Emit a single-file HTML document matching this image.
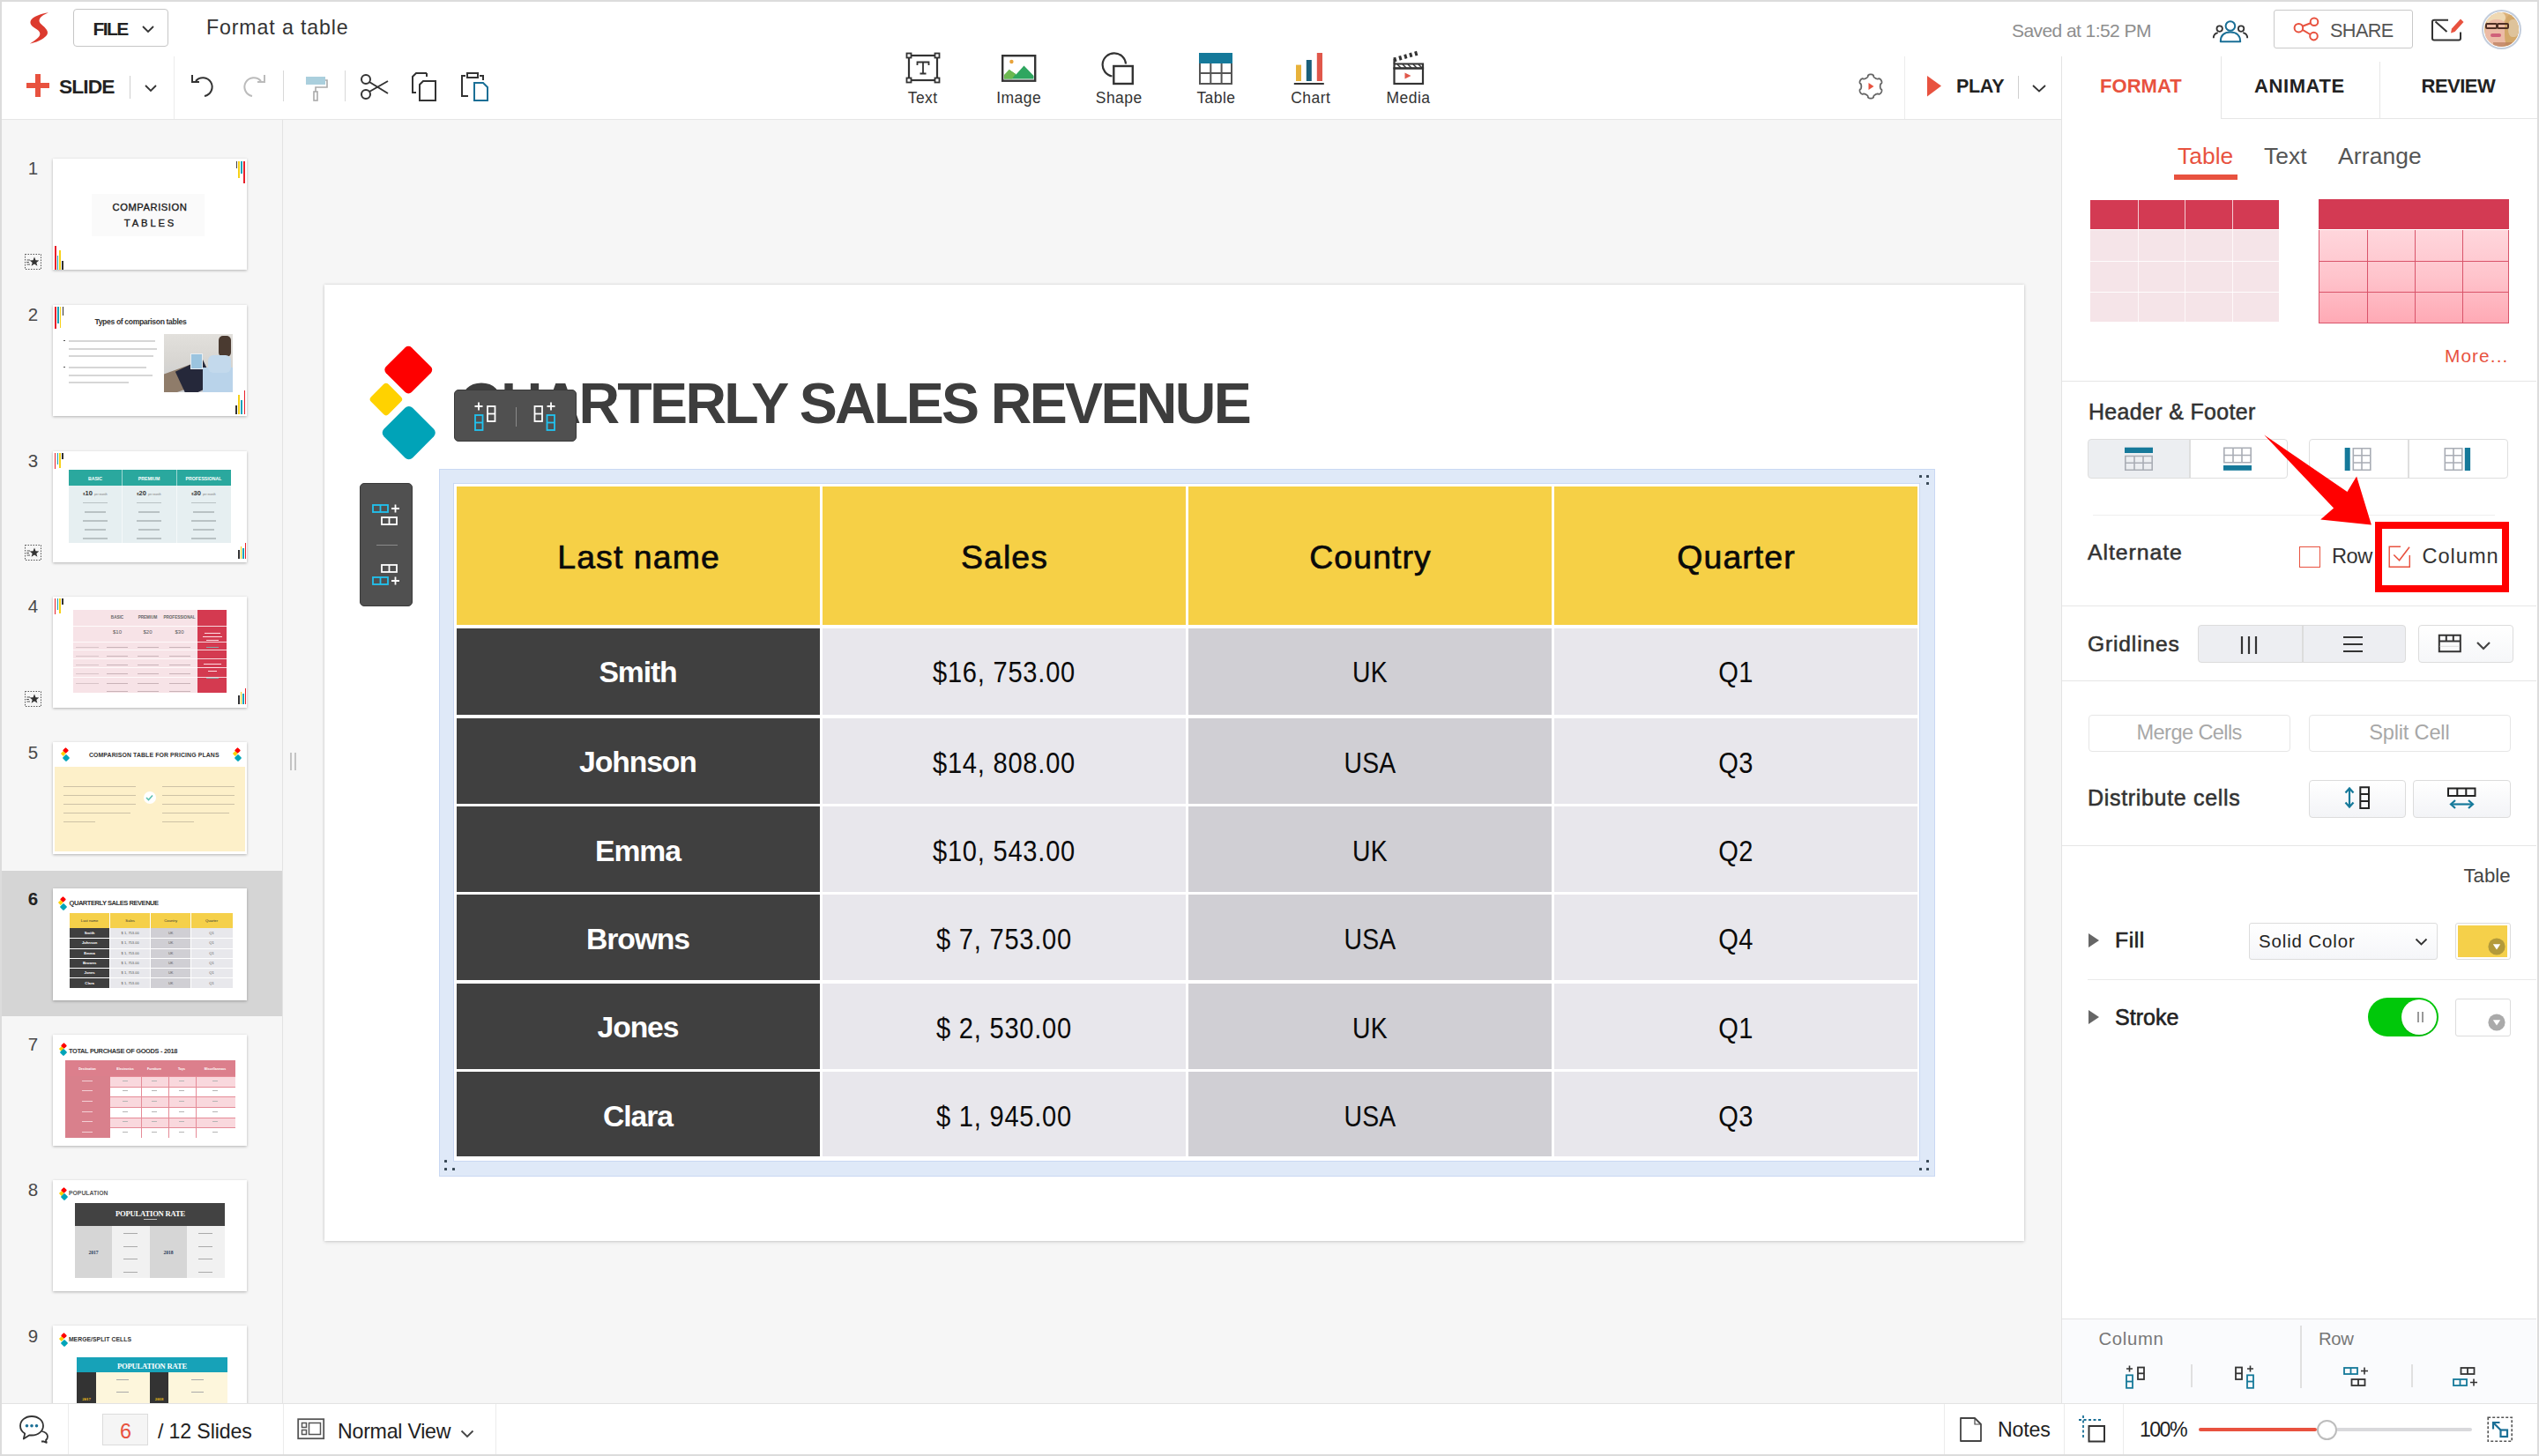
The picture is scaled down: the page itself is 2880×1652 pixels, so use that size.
<!DOCTYPE html>
<html><head><meta charset="utf-8"><title>Format a table</title>
<style>
html,body{margin:0;padding:0;}
body{width:2880px;height:1652px;overflow:hidden;position:relative;background:#dcdcdc;font-family:"Liberation Sans",sans-serif;}
.a{position:absolute;}
.t{line-height:1;white-space:nowrap;}
svg{overflow:visible;}
</style></head><body>
<div class="a" style="left:2px;top:2px;width:2876px;height:1648px;background:#ffffff;"></div>
<div class="a" style="left:2px;top:136px;width:318px;height:1456px;background:#f6f6f6;"></div>
<div class="a" style="left:320px;top:136px;width:1px;height:1456px;background:#e3e3e3;"></div>
<div class="a" style="left:321px;top:136px;width:2017px;height:1456px;background:#f6f6f6;"></div>
<div class="a" style="left:2px;top:135px;width:2336px;height:1px;background:#e6e6e6;"></div>
<div class="a" style="left:2519px;top:134px;width:359px;height:1px;background:#e6e6e6;"></div>
<div class="a" style="left:2338px;top:64px;width:1px;height:1528px;background:#e3e3e3;"></div>
<div class="a" style="left:2px;top:1592px;width:2876px;height:1px;background:#e3e3e3;"></div>
<svg class="a" style="left:25px;top:8px;" width="40" height="48" viewBox="0 0 40 48"><path d="M30 6.3 C22 7.5, 11 11, 9.6 16 C8.5 20.5, 13 23, 17 25.5 C20 27.5, 21 30, 20 32.3 C18 36, 12 39.5, 8.9 41.6 C15 40.5, 24 37, 28 32 C30.5 28.5, 28 25, 24 21.5 C21 19, 18.5 16.5, 20 13.5 C21.5 10.5, 26 8, 30 6.3 Z" fill="#dc3a2e"/></svg>
<div class="a" style="left:83px;top:10px;width:108px;height:43px;border:1px solid #c6c6c6;border-radius:4px;box-sizing:border-box;"></div>
<div class="a t" style="top:22.22px;font-size:21px;font-weight:700;color:#222;letter-spacing:-1.6px;left:105.5px;">FILE</div>
<svg class="a" style="left:161px;top:29px;" width="14" height="9" viewBox="0 0 14 9"><path d="M1 1 L7 7 L13 1" fill="none" stroke="#333" stroke-width="1.8"/></svg>
<div class="a t" style="top:20.06px;font-size:23.2px;font-weight:400;color:#333;letter-spacing:0.86px;left:234px;">Format a table</div>
<div class="a t" style="top:24.22px;font-size:21px;font-weight:400;color:#8e8e8e;letter-spacing:-0.57px;left:2282px;">Saved at 1:52 PM</div>
<svg class="a" style="left:2508px;top:20px;" width="44" height="30" viewBox="0 0 44 30">
<circle cx="21.9" cy="9.5" r="5.3" fill="none" stroke="#1a6f96" stroke-width="2"/>
<path d="M10.8 27.2 C10.8 19.8, 15.5 16.6, 21.9 16.6 C28.3 16.6, 33.2 19.8, 33.2 27.2 Z" fill="none" stroke="#1a6f96" stroke-width="2" stroke-linejoin="round"/>
<circle cx="9.7" cy="12.6" r="3.2" fill="none" stroke="#333" stroke-width="1.8"/>
<path d="M2.8 23.3 C2.8 20, 4.6 17.8, 7.8 17.2" fill="none" stroke="#333" stroke-width="1.8"/>
<circle cx="34.1" cy="12.6" r="3.2" fill="none" stroke="#333" stroke-width="1.8"/>
<path d="M41.2 23.3 C41.2 20, 39.4 17.8, 36.2 17.2" fill="none" stroke="#333" stroke-width="1.8"/>
</svg>
<div class="a" style="left:2579px;top:11px;width:158px;height:44px;border:1.5px solid #c9c9c9;border-radius:3px;box-sizing:border-box;"></div>
<svg class="a" style="left:2600px;top:18px;" width="32" height="30" viewBox="0 0 32 30">
<circle cx="7.4" cy="13.7" r="4.8" fill="none" stroke="#e8523f" stroke-width="2"/>
<circle cx="25" cy="6.7" r="4.3" fill="none" stroke="#e8523f" stroke-width="2"/>
<circle cx="24.5" cy="23.1" r="4.3" fill="none" stroke="#e8523f" stroke-width="2"/>
<path d="M11.8 11.8 L20.9 8.3 M11.8 15.8 L20.5 21" stroke="#e8523f" stroke-width="2"/>
</svg>
<div class="a t" style="top:23.63px;font-size:21.7px;font-weight:400;color:#555;letter-spacing:-0.6px;left:2643px;">SHARE</div>
<svg class="a" style="left:2756px;top:19px;" width="42" height="30" viewBox="0 0 42 30">
<path d="M21 3.8 H5 Q3 3.8 3 5.8 V24.5 Q3 26.5 5 26.5 H33 Q35 26.5 35 24.5 V17.5" fill="none" stroke="#333" stroke-width="2"/>
<path d="M6.5 5.5 L19.5 17" fill="none" stroke="#333" stroke-width="2"/>
<path d="M25 13.5 L35 2.5 L38.5 6 L28.5 17 L24 18.5 Z" fill="#e8523f"/>
</svg>
<div class="a" style="left:2815px;top:10.5px;width:45px;height:45px;border-radius:50%;box-sizing:border-box;border:2px solid #c3cddc;background:#fff;"></div><div class="a" style="left:2818px;top:13.5px;width:39px;height:39px;border-radius:50%;overflow:hidden;background:#dcb27a;"><div style="position:absolute;left:0;top:-2px;width:24px;height:16px;border-radius:50%;background:#efd9b4;"></div><div style="position:absolute;left:1px;top:8px;width:26px;height:32px;border-radius:45%;background:#ecbba6;"></div><div style="position:absolute;left:23px;top:2px;width:18px;height:40px;border-radius:40%;background:#d3a86a;"></div><div style="position:absolute;left:27px;top:8px;width:12px;height:20px;border-radius:40%;background:#e9ddcc;opacity:0.5;"></div><div style="position:absolute;left:1px;top:12.5px;width:13.5px;height:7px;border:2.2px solid #4e2e24;border-radius:2px;box-sizing:border-box;"></div><div style="position:absolute;left:14px;top:12.5px;width:13.5px;height:7px;border:2.2px solid #4e2e24;border-radius:2px;box-sizing:border-box;"></div><div style="position:absolute;left:7px;top:24.5px;width:12px;height:4px;border-radius:2px;background:#d0607a;"></div><div style="position:absolute;left:10px;top:34px;width:22px;height:8px;background:#b97c5c;opacity:0.7;"></div></div>
<div class="a" style="left:30px;top:94px;width:26px;height:6px;background:#e8523f;"></div>
<div class="a" style="left:40px;top:84px;width:6px;height:26px;background:#e8523f;"></div>
<div class="a t" style="top:86.70px;font-size:22.8px;font-weight:700;color:#222;letter-spacing:-0.9px;left:67px;">SLIDE</div>
<div class="a" style="left:147px;top:86px;width:1px;height:26px;background:#cfcfcf;"></div>
<svg class="a" style="left:164px;top:96px;" width="14" height="9" viewBox="0 0 14 9"><path d="M1 1 L7 7 L13 1" fill="none" stroke="#333" stroke-width="1.8"/></svg>
<div class="a" style="left:197px;top:64px;width:1px;height:71px;background:#ececec;"></div>
<svg class="a" style="left:216px;top:83px;" width="30" height="30" viewBox="0 0 30 30"><path d="M6 9 A10.5 10.5 0 1 1 16 26" fill="none" stroke="#333" stroke-width="2"/><path d="M2 2 V10 H10" fill="none" stroke="#333" stroke-width="2"/></svg>
<svg class="a" style="left:272px;top:83px;" width="30" height="30" viewBox="0 0 30 30"><path d="M24 9 A10.5 10.5 0 1 0 14 26" fill="none" stroke="#bbb" stroke-width="2"/><path d="M28 2 V10 H20" fill="none" stroke="#bbb" stroke-width="2"/></svg>
<div class="a" style="left:321px;top:80px;width:1px;height:35px;background:#d8d8d8;"></div>
<svg class="a" style="left:344px;top:84px;" width="30" height="33" viewBox="0 0 30 33"><rect x="3" y="3" width="22" height="9" fill="#aacfdd"/><path d="M25 7 H27 V15 H14 V20" fill="none" stroke="#aaa" stroke-width="1.6"/><rect x="12" y="20" width="4" height="10" fill="none" stroke="#aaa" stroke-width="1.6"/></svg>
<div class="a" style="left:391px;top:80px;width:1px;height:35px;background:#d8d8d8;"></div>
<svg class="a" style="left:408px;top:83px;" width="34" height="32" viewBox="0 0 34 32"><circle cx="7" cy="7" r="5" fill="none" stroke="#333" stroke-width="2"/><circle cx="7" cy="24" r="5" fill="none" stroke="#333" stroke-width="2"/><path d="M11 10 L32 23 M11 21 L32 9" fill="none" stroke="#333" stroke-width="2"/></svg>
<svg class="a" style="left:466px;top:81px;" width="32" height="35" viewBox="0 0 32 35"><path d="M18 2 H6 L2 6 V24 H6" fill="none" stroke="#333" stroke-width="2"/><path d="M18 2 V6" stroke="#333" stroke-width="2"/><path d="M14 11 H28 V33 H10 V15 Z" fill="none" stroke="#333" stroke-width="2"/></svg>
<svg class="a" style="left:520px;top:81px;" width="36" height="35" viewBox="0 0 36 35"><path d="M8 5 H4 V28 H11" fill="none" stroke="#333" stroke-width="2"/><path d="M24 5 H28 V10" fill="none" stroke="#333" stroke-width="2"/><rect x="10" y="2" width="12" height="5" fill="none" stroke="#333" stroke-width="2"/><path d="M18 13 H28 L33 18 V33 H18 Z" fill="none" stroke="#1a6f96" stroke-width="2"/></svg>
<svg class="a" style="left:1027px;top:59px;" width="40" height="36" viewBox="0 0 40 36">
<rect x="4" y="4" width="32" height="28" fill="none" stroke="#333" stroke-width="2.2"/>
<rect x="1.5" y="1.5" width="5" height="5" fill="#fff" stroke="#333" stroke-width="1.8"/>
<rect x="33.5" y="1.5" width="5" height="5" fill="#fff" stroke="#333" stroke-width="1.8"/>
<rect x="1.5" y="29.5" width="5" height="5" fill="#fff" stroke="#333" stroke-width="1.8"/>
<rect x="33.5" y="29.5" width="5" height="5" fill="#fff" stroke="#333" stroke-width="1.8"/>
<path d="M13.5 15 V11.5 H26.5 V15 M20 11.5 V24.5 M16.5 24.5 H23.5" fill="none" stroke="#333" stroke-width="1.8"/>
</svg>
<div class="a t" style="top:102.98px;font-size:17.5px;font-weight:400;color:#333;letter-spacing:0.4px;left:46.70px;width:2000px;text-align:center;">Text</div>
<svg class="a" style="left:1135px;top:61px;" width="42" height="34" viewBox="0 0 42 34">
<rect x="2.2" y="2.2" width="37" height="28.5" fill="none" stroke="#333" stroke-width="2.4"/>
<circle cx="12.4" cy="9" r="2.2" fill="#e8a33a"/>
<path d="M4.5 28.5 L4.5 24 L9.8 18 L17 23 L4.5 28.5 Z" fill="#6cb850"/>
<path d="M4 28.5 L9.5 18.3 L17.5 23.5 L26.5 13.4 L37.5 25 V28.5 Z" fill="#2fa660"/>
<path d="M4 28.5 V24 L9.6 18.3 L17 23 L13 28.5 Z" fill="#6cb850"/>
</svg>
<div class="a t" style="top:102.98px;font-size:17.5px;font-weight:400;color:#333;letter-spacing:0.45px;left:155.72px;width:2000px;text-align:center;">Image</div>
<svg class="a" style="left:1248px;top:57px;" width="40" height="40" viewBox="0 0 40 40">
<path d="M13.5 29.5 A13.2 13.2 0 1 1 29 15.5" fill="none" stroke="#333" stroke-width="2.2"/>
<rect x="15.3" y="18" width="21.5" height="20" fill="none" stroke="#333" stroke-width="2.4"/>
</svg>
<div class="a t" style="top:102.98px;font-size:17.5px;font-weight:400;color:#333;letter-spacing:0.45px;left:269.23px;width:2000px;text-align:center;">Shape</div>
<svg class="a" style="left:1359px;top:59px;" width="40" height="38" viewBox="0 0 40 38">
<rect x="1" y="1" width="38" height="12" fill="#15799a"/>
<path d="M2 13 V36 H38 V13 M14.3 13 V36 M26.6 13 V36 M2 24 H38" fill="none" stroke="#555" stroke-width="2"/>
</svg>
<div class="a t" style="top:102.98px;font-size:17.5px;font-weight:400;color:#333;letter-spacing:0.45px;left:379.43px;width:2000px;text-align:center;">Table</div>
<svg class="a" style="left:1466px;top:58px;" width="38" height="40" viewBox="0 0 38 40">
<rect x="4" y="15.6" width="6" height="18.4" fill="#e8b23a"/>
<rect x="15.8" y="10" width="6" height="24" fill="#1a5f7a"/>
<rect x="27.8" y="2" width="6.2" height="32" fill="#e0574a"/>
<rect x="1.8" y="36" width="34" height="2" fill="#333"/>
</svg>
<div class="a t" style="top:102.98px;font-size:17.5px;font-weight:400;color:#333;letter-spacing:0.45px;left:486.73px;width:2000px;text-align:center;">Chart</div>
<svg class="a" style="left:1578px;top:57px;" width="40" height="40" viewBox="0 0 40 40">
<rect x="3.5" y="20.5" width="32.5" height="17.5" fill="none" stroke="#333" stroke-width="2.2"/>
<path d="M3.5 15.5 H36 V20.5 H3.5 Z" fill="none" stroke="#333" stroke-width="2.2"/>
<path d="M7 16 L11 20 M13 16 L17 20 M19 16 L23 20 M25 16 L29 20 M31 16 L35 20" stroke="#333" stroke-width="1.5"/>
<path d="M3 11 L30.5 3" fill="none" stroke="#333" stroke-width="5" stroke-dasharray="3 3.2"/>
<path d="M3.5 10 V15" stroke="#333" stroke-width="2.2"/>
<path d="M15.5 25.5 L22.5 29 L15.5 32.5 Z" fill="#e0574a"/>
</svg>
<div class="a t" style="top:102.98px;font-size:17.5px;font-weight:400;color:#333;letter-spacing:0.45px;left:597.52px;width:2000px;text-align:center;">Media</div>
<svg class="a" style="left:2106px;top:82px;" width="32" height="32" viewBox="0 0 32 32"><path d="M26.70 16.00 L26.71 16.37 L26.73 16.75 L26.78 17.13 L26.84 17.52 L26.93 17.93 L27.07 18.35 L27.31 18.82 L28.25 19.51 L28.44 20.04 L28.50 20.55 L28.47 21.04 L28.39 21.52 L28.26 21.98 L28.08 22.42 L27.86 22.85 L27.61 23.25 L27.31 23.63 L26.97 23.97 L26.60 24.28 L26.19 24.55 L25.72 24.76 L25.17 24.85 L24.10 24.39 L23.57 24.41 L23.14 24.50 L22.74 24.63 L22.37 24.77 L22.02 24.92 L21.68 25.09 L21.35 25.27 L21.03 25.46 L20.72 25.67 L20.41 25.90 L20.10 26.15 L19.80 26.43 L19.50 26.76 L19.21 27.21 L19.08 28.36 L18.72 28.80 L18.31 29.10 L17.87 29.32 L17.42 29.49 L16.95 29.61 L16.48 29.68 L16.00 29.70 L15.52 29.68 L15.05 29.61 L14.58 29.49 L14.13 29.32 L13.69 29.10 L13.28 28.80 L12.92 28.36 L12.79 27.21 L12.50 26.76 L12.20 26.43 L11.90 26.15 L11.59 25.90 L11.28 25.67 L10.97 25.46 L10.65 25.27 L10.32 25.09 L9.98 24.92 L9.63 24.77 L9.26 24.63 L8.86 24.50 L8.43 24.41 L7.90 24.39 L6.83 24.85 L6.28 24.76 L5.81 24.55 L5.40 24.28 L5.03 23.97 L4.69 23.63 L4.39 23.25 L4.14 22.85 L3.92 22.42 L3.74 21.98 L3.61 21.52 L3.53 21.04 L3.50 20.55 L3.56 20.04 L3.75 19.51 L4.69 18.82 L4.93 18.35 L5.07 17.93 L5.16 17.52 L5.22 17.13 L5.27 16.75 L5.29 16.37 L5.30 16.00 L5.29 15.63 L5.27 15.25 L5.22 14.87 L5.16 14.48 L5.07 14.07 L4.93 13.65 L4.69 13.18 L3.75 12.49 L3.56 11.96 L3.50 11.45 L3.53 10.96 L3.61 10.48 L3.74 10.02 L3.92 9.58 L4.14 9.15 L4.39 8.75 L4.69 8.37 L5.03 8.03 L5.40 7.72 L5.81 7.45 L6.28 7.24 L6.83 7.15 L7.90 7.61 L8.43 7.59 L8.86 7.50 L9.26 7.37 L9.63 7.23 L9.98 7.08 L10.32 6.91 L10.65 6.73 L10.97 6.54 L11.28 6.33 L11.59 6.10 L11.90 5.85 L12.20 5.57 L12.50 5.24 L12.79 4.79 L12.92 3.64 L13.28 3.20 L13.69 2.90 L14.13 2.68 L14.58 2.51 L15.05 2.39 L15.52 2.32 L16.00 2.30 L16.48 2.32 L16.95 2.39 L17.42 2.51 L17.87 2.68 L18.31 2.90 L18.72 3.20 L19.08 3.64 L19.21 4.79 L19.50 5.24 L19.80 5.57 L20.10 5.85 L20.41 6.10 L20.72 6.33 L21.03 6.54 L21.35 6.73 L21.68 6.91 L22.02 7.08 L22.37 7.23 L22.74 7.37 L23.14 7.50 L23.57 7.59 L24.10 7.61 L25.17 7.15 L25.72 7.24 L26.19 7.45 L26.60 7.72 L26.97 8.03 L27.31 8.37 L27.61 8.75 L27.86 9.15 L28.08 9.58 L28.26 10.02 L28.39 10.48 L28.47 10.96 L28.50 11.45 L28.44 11.96 L28.25 12.49 L27.31 13.18 L27.07 13.65 L26.93 14.07 L26.84 14.48 L26.78 14.87 L26.73 15.25 L26.71 15.63 Z" fill="none" stroke="#666" stroke-width="1.8"/><path d="M13.5 12 L19.5 16 L13.5 20 Z" fill="#e8523f"/></svg>
<div class="a" style="left:2160px;top:64px;width:1px;height:71px;background:#ececec;"></div>
<svg class="a" style="left:2185px;top:85px;" width="18" height="26" viewBox="0 0 18 26"><path d="M1 1 L17 12.5 L1 24.5 Z" fill="#e8523f"/></svg>
<div class="a t" style="top:87.80px;font-size:21.5px;font-weight:700;color:#222;letter-spacing:-0.3px;left:2219px;">PLAY</div>
<div class="a" style="left:2289px;top:86px;width:1px;height:26px;background:#cfcfcf;"></div>
<svg class="a" style="left:2305px;top:96px;" width="16" height="9" viewBox="0 0 16 9"><path d="M1 1 L8 7.5 L15 1" fill="none" stroke="#333" stroke-width="1.8"/></svg>
<div class="a" style="left:2519px;top:64px;width:1px;height:70px;background:#e6e6e6;"></div>
<div class="a" style="left:2699px;top:70px;width:1px;height:64px;background:#e6e6e6;"></div>
<div class="a t" style="top:87.37px;font-size:22px;font-weight:700;color:#e8523f;letter-spacing:0.05px;left:2382px;">FORMAT</div>
<div class="a t" style="top:87.37px;font-size:22px;font-weight:700;color:#222;letter-spacing:0.6px;left:2557px;">ANIMATE</div>
<div class="a t" style="top:87.37px;font-size:22px;font-weight:700;color:#222;letter-spacing:-0.5px;left:2746.5px;">REVIEW</div>
<div class="a" style="left:2px;top:988px;width:318px;height:165px;background:#d5d5d5;"></div>
<div class="a" style="left:329px;top:854px;width:2px;height:20px;background:#c4c4c4;"></div>
<div class="a" style="left:334px;top:854px;width:2px;height:20px;background:#c4c4c4;"></div>
<div class="a" style="left:60px;top:179.6px;width:220px;height:126.4px;background:#fff;box-shadow:0 1px 3px rgba(0,0,0,0.28);overflow:hidden;"><div style="position:absolute;left:207.5px;top:3px;width:1.8px;height:8px;background:#444;"></div><div style="position:absolute;left:210.1px;top:3px;width:1.8px;height:19px;background:#f7d117;"></div><div style="position:absolute;left:212.9px;top:3px;width:1.8px;height:14px;background:#1aa3b8;"></div><div style="position:absolute;left:216.0px;top:3px;width:2px;height:25px;background:#e8202a;"></div><div style="position:absolute;left:2.3px;top:99px;width:1.8px;height:27px;background:#e8202a;"></div><div style="position:absolute;left:4.9px;top:110px;width:1.6px;height:16px;background:#1aa3b8;"></div><div style="position:absolute;left:7.3px;top:104px;width:1.6px;height:22px;background:#f7d117;"></div><div style="position:absolute;left:10.3px;top:116px;width:1.6px;height:10px;background:#333;"></div><div style="position:absolute;left:44px;top:40px;width:128px;height:48px;background:#fafafa;"></div><div style="position:absolute;left:10px;width:200px;text-align:center;top:50.02px;font-size:11.2px;line-height:1;font-weight:400;color:#1a1a1a;letter-spacing:0.55px;white-space:nowrap;-webkit-text-stroke:0.35px #1a1a1a;">COMPARISION</div><div style="position:absolute;left:10.5px;width:200px;text-align:center;top:68.02px;font-size:11.2px;line-height:1;font-weight:400;color:#1a1a1a;letter-spacing:2.9px;white-space:nowrap;-webkit-text-stroke:0.35px #1a1a1a;">TABLES</div></div>
<div class="a t" style="top:181.24px;font-size:20.5px;font-weight:400;color:#4a4a4a;left:-962.50px;width:2000px;text-align:center;">1</div>
<svg class="a" style="left:28px;top:288px;" width="20" height="18" viewBox="0 0 20 18"><rect x="0.5" y="0.5" width="18" height="17" fill="none" stroke="#555" stroke-width="1" stroke-dasharray="1.5 1.5"/>
<path d="M11 3.5 L12.5 7.3 L16.3 7.5 L13.3 10 L14.4 13.8 L11 11.6 L7.6 13.8 L8.7 10 L5.7 7.5 L9.5 7.3 Z" fill="#333"/>
<path d="M2.5 7 H6 M2 9.5 H5 M2.5 12 H6" stroke="#555" stroke-width="1"/></svg>
<div class="a" style="left:60px;top:345.8px;width:220px;height:126.4px;background:#fff;box-shadow:0 1px 3px rgba(0,0,0,0.28);overflow:hidden;"><div style="position:absolute;left:2px;top:2px;width:1.8px;height:25.0px;background:#e8202a;"></div><div style="position:absolute;left:5px;top:2px;width:1.6px;height:19.0px;background:#1aa3b8;"></div><div style="position:absolute;left:7.5px;top:2px;width:1.6px;height:24.0px;background:#f7d117;"></div><div style="position:absolute;left:10.5px;top:2px;width:1.6px;height:10.0px;background:#333;"></div><div style="position:absolute;left:207px;top:97px;width:1.6px;height:10px;background:#333;top:114px"></div><div style="position:absolute;left:210px;top:102px;width:1.6px;height:22px;background:#f7d117;"></div><div style="position:absolute;left:213px;top:108px;width:1.6px;height:16px;background:#1aa3b8;"></div><div style="position:absolute;left:216.5px;top:97px;width:1.8px;height:27px;background:#e8202a;"></div><div style="position:absolute;left:47.4px;top:14.92px;font-size:8.6px;line-height:1;font-weight:700;color:#333;letter-spacing:-0.35px;white-space:nowrap;">Types of comparison tables</div><div style="position:absolute;left:18px;top:40.4px;width:98px;height:1.4px;background:#d6d6d6;"></div><div style="position:absolute;left:18px;top:49.4px;width:100px;height:1.4px;background:#d6d6d6;"></div><div style="position:absolute;left:18px;top:57.5px;width:96px;height:1.4px;background:#d6d6d6;"></div><div style="position:absolute;left:18px;top:70.4px;width:88px;height:1.4px;background:#d6d6d6;"></div><div style="position:absolute;left:18px;top:79.5px;width:95px;height:1.4px;background:#d6d6d6;"></div><div style="position:absolute;left:18px;top:87.5px;width:68px;height:1.4px;background:#d6d6d6;"></div><div style="position:absolute;left:12px;top:40px;width:1.5px;height:1.5px;background:#555;"></div><div style="position:absolute;left:12px;top:70px;width:1.5px;height:1.5px;background:#555;"></div><div style="position:absolute;left:125.5px;top:33.4px;width:78.2px;height:66px;background:linear-gradient(180deg,#e2e0dc 0%,#d8d6d2 45%,#c9ccd0 100%);overflow:hidden;"><div style="position:absolute;left:0px;top:40px;width:30px;height:26px;background:#8f7c6a;transform:skewY(-20deg);"></div><div style="position:absolute;left:18px;top:34px;width:34px;height:32px;background:#25283a;transform:rotate(-25deg);"></div><div style="position:absolute;left:44px;top:38px;width:34px;height:28px;background:#b9d3ea;"></div><div style="position:absolute;left:30px;top:22px;width:12px;height:16px;background:#9bc4df;border:1px solid #e8eef2;"></div><div style="position:absolute;left:62px;top:2px;width:14px;height:24px;background:#4a3a30;border-radius:5px;"></div><div style="position:absolute;left:50px;top:24px;width:26px;height:20px;background:#c3d9ec;border-radius:6px;"></div></div></div>
<div class="a t" style="top:347.44px;font-size:20.5px;font-weight:400;color:#4a4a4a;left:-962.50px;width:2000px;text-align:center;">2</div>
<div class="a" style="left:60px;top:511.8px;width:220px;height:126.4px;background:#fff;box-shadow:0 1px 3px rgba(0,0,0,0.28);overflow:hidden;"><div style="position:absolute;left:1.6px;top:2px;width:1.8px;height:18.0px;background:#e8202a;"></div><div style="position:absolute;left:4.6px;top:2px;width:1.6px;height:13.68px;background:#1aa3b8;"></div><div style="position:absolute;left:7.1px;top:2px;width:1.6px;height:17.28px;background:#f7d117;"></div><div style="position:absolute;left:10.1px;top:2px;width:1.6px;height:7.199999999999999px;background:#333;"></div><div style="position:absolute;left:17.5px;top:21.7px;width:184.3px;height:17.1px;background:#2aa89e;"></div><div style="position:absolute;left:17.5px;top:38.8px;width:184.3px;height:65.8px;background:#e6eff1;"></div><div style="position:absolute;left:78.2px;top:21.7px;width:0.8px;height:83px;background:rgba(255,255,255,0.55);"></div><div style="position:absolute;left:140px;top:21.7px;width:0.8px;height:83px;background:rgba(255,255,255,0.55);"></div><div style="position:absolute;left:-52px;width:200px;text-align:center;top:29.10px;font-size:5.2px;line-height:1;font-weight:700;color:#ffffff;letter-spacing:0px;white-space:nowrap;">BASIC</div><div style="position:absolute;left:-52px;width:200px;text-align:center;top:44.15px;font-size:7.5px;line-height:1;font-weight:700;color:#333;letter-spacing:0px;white-space:nowrap;"><span style="font-size:4px">$</span>10 <span style="font-size:3px;color:#999">per month</span></div><div style="position:absolute;left:34px;top:58.0px;width:28px;height:1.3px;background:#b9c2c4;"></div><div style="position:absolute;left:36px;top:68.5px;width:24px;height:1.3px;background:#b9c2c4;"></div><div style="position:absolute;left:34px;top:78.5px;width:28px;height:1.3px;background:#b9c2c4;"></div><div style="position:absolute;left:36px;top:88.5px;width:24px;height:1.3px;background:#b9c2c4;"></div><div style="position:absolute;left:34px;top:98.5px;width:28px;height:1.3px;background:#b9c2c4;"></div><div style="position:absolute;left:9px;width:200px;text-align:center;top:29.10px;font-size:5.2px;line-height:1;font-weight:700;color:#ffffff;letter-spacing:0px;white-space:nowrap;">PREMIUM</div><div style="position:absolute;left:9px;width:200px;text-align:center;top:44.15px;font-size:7.5px;line-height:1;font-weight:700;color:#333;letter-spacing:0px;white-space:nowrap;"><span style="font-size:4px">$</span>20 <span style="font-size:3px;color:#999">per month</span></div><div style="position:absolute;left:95px;top:58.0px;width:28px;height:1.3px;background:#b9c2c4;"></div><div style="position:absolute;left:97px;top:68.5px;width:24px;height:1.3px;background:#b9c2c4;"></div><div style="position:absolute;left:95px;top:78.5px;width:28px;height:1.3px;background:#b9c2c4;"></div><div style="position:absolute;left:97px;top:88.5px;width:24px;height:1.3px;background:#b9c2c4;"></div><div style="position:absolute;left:95px;top:98.5px;width:28px;height:1.3px;background:#b9c2c4;"></div><div style="position:absolute;left:71px;width:200px;text-align:center;top:29.10px;font-size:5.2px;line-height:1;font-weight:700;color:#ffffff;letter-spacing:0px;white-space:nowrap;">PROFESSIONAL</div><div style="position:absolute;left:71px;width:200px;text-align:center;top:44.15px;font-size:7.5px;line-height:1;font-weight:700;color:#333;letter-spacing:0px;white-space:nowrap;"><span style="font-size:4px">$</span>30 <span style="font-size:3px;color:#999">per month</span></div><div style="position:absolute;left:157px;top:58.0px;width:28px;height:1.3px;background:#b9c2c4;"></div><div style="position:absolute;left:159px;top:68.5px;width:24px;height:1.3px;background:#b9c2c4;"></div><div style="position:absolute;left:157px;top:78.5px;width:28px;height:1.3px;background:#b9c2c4;"></div><div style="position:absolute;left:159px;top:88.5px;width:24px;height:1.3px;background:#b9c2c4;"></div><div style="position:absolute;left:157px;top:98.5px;width:28px;height:1.3px;background:#b9c2c4;"></div><div style="position:absolute;left:210px;top:112px;width:1.6px;height:10px;background:#333;"></div><div style="position:absolute;left:212.5px;top:108px;width:1.6px;height:14px;background:#f7d117;"></div><div style="position:absolute;left:215px;top:110px;width:1.6px;height:12px;background:#1aa3b8;"></div><div style="position:absolute;left:217.5px;top:104.6px;width:1.8px;height:17.4px;background:#e8202a;"></div></div>
<div class="a t" style="top:513.44px;font-size:20.5px;font-weight:400;color:#4a4a4a;left:-962.50px;width:2000px;text-align:center;">3</div>
<svg class="a" style="left:28px;top:618.2px;" width="20" height="18" viewBox="0 0 20 18"><rect x="0.5" y="0.5" width="18" height="17" fill="none" stroke="#555" stroke-width="1" stroke-dasharray="1.5 1.5"/>
<path d="M11 3.5 L12.5 7.3 L16.3 7.5 L13.3 10 L14.4 13.8 L11 11.6 L7.6 13.8 L8.7 10 L5.7 7.5 L9.5 7.3 Z" fill="#333"/>
<path d="M2.5 7 H6 M2 9.5 H5 M2.5 12 H6" stroke="#555" stroke-width="1"/></svg>
<div class="a" style="left:60px;top:676.8px;width:220px;height:126.4px;background:#fff;box-shadow:0 1px 3px rgba(0,0,0,0.28);overflow:hidden;"><div style="position:absolute;left:1.6px;top:2px;width:1.8px;height:18.0px;background:#e8202a;"></div><div style="position:absolute;left:4.6px;top:2px;width:1.6px;height:13.68px;background:#1aa3b8;"></div><div style="position:absolute;left:7.1px;top:2px;width:1.6px;height:17.28px;background:#f7d117;"></div><div style="position:absolute;left:10.1px;top:2px;width:1.6px;height:7.199999999999999px;background:#333;"></div><div style="position:absolute;left:23px;top:15.6px;width:140.5px;height:93.4px;background:#f7e3e7;"></div><div style="position:absolute;left:163.5px;top:15.6px;width:33.1px;height:93.4px;background:#d43a50;"></div><div style="position:absolute;left:23px;top:33px;width:173.6px;height:0.6px;background:rgba(255,255,255,0.8);"></div><div style="position:absolute;left:23px;top:51px;width:173.6px;height:0.6px;background:rgba(255,255,255,0.8);"></div><div style="position:absolute;left:23px;top:60.6px;width:173.6px;height:0.6px;background:rgba(255,255,255,0.8);"></div><div style="position:absolute;left:23px;top:70.4px;width:173.6px;height:0.6px;background:rgba(255,255,255,0.8);"></div><div style="position:absolute;left:23px;top:80.5px;width:173.6px;height:0.6px;background:rgba(255,255,255,0.8);"></div><div style="position:absolute;left:23px;top:91.6px;width:173.6px;height:0.6px;background:rgba(255,255,255,0.8);"></div><div style="position:absolute;left:-27px;width:200px;text-align:center;top:22.61px;font-size:4.6px;line-height:1;font-weight:700;color:#666;letter-spacing:0px;white-space:nowrap;">BASIC</div><div style="position:absolute;left:-27px;width:200px;text-align:center;top:37.42px;font-size:6px;line-height:1;font-weight:400;color:#555;letter-spacing:0px;white-space:nowrap;">$10</div><div style="position:absolute;left:61px;top:57px;width:24px;height:1.1px;background:#c9b3b8;"></div><div style="position:absolute;left:61px;top:67px;width:24px;height:1.1px;background:#c9b3b8;"></div><div style="position:absolute;left:61px;top:77px;width:24px;height:1.1px;background:#c9b3b8;"></div><div style="position:absolute;left:61px;top:87px;width:24px;height:1.1px;background:#c9b3b8;"></div><div style="position:absolute;left:61px;top:98px;width:24px;height:1.1px;background:#c9b3b8;"></div><div style="position:absolute;left:61px;top:107px;width:24px;height:1.1px;background:#c9b3b8;"></div><div style="position:absolute;left:7.5px;width:200px;text-align:center;top:22.61px;font-size:4.6px;line-height:1;font-weight:700;color:#666;letter-spacing:0px;white-space:nowrap;">PREMIUM</div><div style="position:absolute;left:7.5px;width:200px;text-align:center;top:37.42px;font-size:6px;line-height:1;font-weight:400;color:#555;letter-spacing:0px;white-space:nowrap;">$20</div><div style="position:absolute;left:95.5px;top:57px;width:24px;height:1.1px;background:#c9b3b8;"></div><div style="position:absolute;left:95.5px;top:67px;width:24px;height:1.1px;background:#c9b3b8;"></div><div style="position:absolute;left:95.5px;top:77px;width:24px;height:1.1px;background:#c9b3b8;"></div><div style="position:absolute;left:95.5px;top:87px;width:24px;height:1.1px;background:#c9b3b8;"></div><div style="position:absolute;left:95.5px;top:98px;width:24px;height:1.1px;background:#c9b3b8;"></div><div style="position:absolute;left:95.5px;top:107px;width:24px;height:1.1px;background:#c9b3b8;"></div><div style="position:absolute;left:43.5px;width:200px;text-align:center;top:22.61px;font-size:4.6px;line-height:1;font-weight:700;color:#666;letter-spacing:0px;white-space:nowrap;">PROFESSIONAL</div><div style="position:absolute;left:43.5px;width:200px;text-align:center;top:37.42px;font-size:6px;line-height:1;font-weight:400;color:#555;letter-spacing:0px;white-space:nowrap;">$30</div><div style="position:absolute;left:131.5px;top:57px;width:24px;height:1.1px;background:#c9b3b8;"></div><div style="position:absolute;left:131.5px;top:67px;width:24px;height:1.1px;background:#c9b3b8;"></div><div style="position:absolute;left:131.5px;top:77px;width:24px;height:1.1px;background:#c9b3b8;"></div><div style="position:absolute;left:131.5px;top:87px;width:24px;height:1.1px;background:#c9b3b8;"></div><div style="position:absolute;left:131.5px;top:98px;width:24px;height:1.1px;background:#c9b3b8;"></div><div style="position:absolute;left:131.5px;top:107px;width:24px;height:1.1px;background:#c9b3b8;"></div><div style="position:absolute;left:26px;top:57px;width:26px;height:1.0px;background:#d8c4c8;"></div><div style="position:absolute;left:26px;top:67px;width:26px;height:1.0px;background:#d8c4c8;"></div><div style="position:absolute;left:26px;top:77px;width:26px;height:1.0px;background:#d8c4c8;"></div><div style="position:absolute;left:26px;top:87px;width:26px;height:1.0px;background:#d8c4c8;"></div><div style="position:absolute;left:26px;top:98px;width:26px;height:1.0px;background:#d8c4c8;"></div><div style="position:absolute;left:172px;top:41px;width:18px;height:1.6px;background:#ffdde3;"></div><div style="position:absolute;left:170px;top:45px;width:22px;height:1.6px;background:#ffdde3;"></div><div style="position:absolute;left:174px;top:49px;width:14px;height:1.6px;background:#ffdde3;"></div><div style="position:absolute;left:174px;top:57px;width:14px;height:1.0px;background:#8aa;"></div><div style="position:absolute;left:171px;top:76px;width:20px;height:1.6px;background:#ffdde3;"></div><div style="position:absolute;left:173px;top:80px;width:16px;height:1.6px;background:#ffdde3;"></div><div style="position:absolute;left:176px;top:84px;width:10px;height:1.6px;background:#ffdde3;"></div><div style="position:absolute;left:174px;top:92px;width:14px;height:1.0px;background:#8aa;"></div><div style="position:absolute;left:210px;top:112px;width:1.6px;height:10px;background:#333;"></div><div style="position:absolute;left:212.5px;top:108px;width:1.6px;height:14px;background:#f7d117;"></div><div style="position:absolute;left:215px;top:110px;width:1.6px;height:12px;background:#1aa3b8;"></div><div style="position:absolute;left:217.5px;top:104.6px;width:1.8px;height:17.4px;background:#e8202a;"></div></div>
<div class="a t" style="top:678.44px;font-size:20.5px;font-weight:400;color:#4a4a4a;left:-962.50px;width:2000px;text-align:center;">4</div>
<svg class="a" style="left:28px;top:784px;" width="20" height="18" viewBox="0 0 20 18"><rect x="0.5" y="0.5" width="18" height="17" fill="none" stroke="#555" stroke-width="1" stroke-dasharray="1.5 1.5"/>
<path d="M11 3.5 L12.5 7.3 L16.3 7.5 L13.3 10 L14.4 13.8 L11 11.6 L7.6 13.8 L8.7 10 L5.7 7.5 L9.5 7.3 Z" fill="#333"/>
<path d="M2.5 7 H6 M2 9.5 H5 M2.5 12 H6" stroke="#555" stroke-width="1"/></svg>
<div class="a" style="left:60px;top:842.3px;width:220px;height:126.4px;background:#fff;box-shadow:0 1px 3px rgba(0,0,0,0.28);overflow:hidden;"><div style="position:absolute;left:2px;top:28px;width:216px;height:96.2px;background:#fdf0c9;"></div><div style="position:absolute;left:12.0px;top:7px;width:5.0px;height:5.0px;background:#fe0000;transform:rotate(45deg);border-radius:1px;"></div><div style="position:absolute;left:10px;top:11.2px;width:3.5px;height:3.5px;background:#ffd000;transform:rotate(45deg);"></div><div style="position:absolute;left:11.6px;top:14.5px;width:6.0px;height:6.0px;background:#00a4b8;transform:rotate(45deg);border-radius:1px;"></div><div style="position:absolute;left:207.0px;top:7px;width:5.0px;height:5.0px;background:#fe0000;transform:rotate(45deg);border-radius:1px;"></div><div style="position:absolute;left:205px;top:11.2px;width:3.5px;height:3.5px;background:#ffd000;transform:rotate(45deg);"></div><div style="position:absolute;left:206.6px;top:14.5px;width:6.0px;height:6.0px;background:#00a4b8;transform:rotate(45deg);border-radius:1px;"></div><div style="position:absolute;left:40.9px;top:11.76px;font-size:6.9px;line-height:1;font-weight:700;color:#333;letter-spacing:0.12px;white-space:nowrap;">COMPARISON TABLE FOR PRICING PLANS</div><div style="position:absolute;left:11.5px;top:49.5px;width:82px;height:1.1px;background:#cdc2a6;"></div><div style="position:absolute;left:123.5px;top:49.5px;width:82px;height:1.1px;background:#cdc2a6;"></div><div style="position:absolute;left:11.5px;top:59.5px;width:82px;height:1.1px;background:#cdc2a6;"></div><div style="position:absolute;left:123.5px;top:59.5px;width:82px;height:1.1px;background:#cdc2a6;"></div><div style="position:absolute;left:11.5px;top:69.5px;width:82px;height:1.1px;background:#cdc2a6;"></div><div style="position:absolute;left:123.5px;top:69.5px;width:82px;height:1.1px;background:#cdc2a6;"></div><div style="position:absolute;left:11.5px;top:79.5px;width:76px;height:1.1px;background:#cdc2a6;"></div><div style="position:absolute;left:123.5px;top:79.5px;width:76px;height:1.1px;background:#cdc2a6;"></div><div style="position:absolute;left:11.5px;top:89.5px;width:36px;height:1.1px;background:#cdc2a6;"></div><div style="position:absolute;left:123.5px;top:89.5px;width:36px;height:1.1px;background:#cdc2a6;"></div><div style="position:absolute;left:102.5px;top:55.8px;width:14px;height:14px;border-radius:50%;background:#fff;"></div><svg style="position:absolute;left:104px;top:58px" width="11" height="10"><path d="M2 5 L4.5 7.5 L9 2.5" fill="none" stroke="#5cc0b0" stroke-width="1.6"/></svg></div>
<div class="a t" style="top:843.94px;font-size:20.5px;font-weight:400;color:#4a4a4a;left:-962.50px;width:2000px;text-align:center;">5</div>
<div class="a" style="left:60px;top:1008.2px;width:220px;height:126.4px;background:#fff;box-shadow:0 1px 3px rgba(0,0,0,0.28);overflow:hidden;"><div style="position:absolute;left:9.0px;top:10px;width:5.0px;height:5.0px;background:#fe0000;transform:rotate(45deg);border-radius:1px;"></div><div style="position:absolute;left:7px;top:14.2px;width:3.5px;height:3.5px;background:#ffd000;transform:rotate(45deg);"></div><div style="position:absolute;left:8.6px;top:17.5px;width:6.0px;height:6.0px;background:#00a4b8;transform:rotate(45deg);border-radius:1px;"></div><div style="position:absolute;left:18.5px;top:12.87px;font-size:7.6px;line-height:1;font-weight:700;color:#333;letter-spacing:-0.5px;white-space:nowrap;">QUARTERLY SALES REVENUE</div><div style="position:absolute;left:18.7px;top:28px;width:184.9px;height:16.8px;background:#f5d04a;"></div><div style="position:absolute;left:18.7px;top:44.8px;width:45.9px;height:67.8px;background:#3f3f3f;"></div><div style="position:absolute;left:64.6px;top:44.8px;width:46.1px;height:67.8px;background:#e8e8ec;"></div><div style="position:absolute;left:110.7px;top:44.8px;width:46px;height:67.8px;background:#d0cfd4;"></div><div style="position:absolute;left:156.7px;top:44.8px;width:46.9px;height:67.8px;background:#e8e8ec;"></div><div style="position:absolute;left:64.19999999999999px;top:28px;width:0.8px;height:84.6px;background:#fff;"></div><div style="position:absolute;left:110.3px;top:28px;width:0.8px;height:84.6px;background:#fff;"></div><div style="position:absolute;left:156.29999999999998px;top:28px;width:0.8px;height:84.6px;background:#fff;"></div><div style="position:absolute;left:18.7px;top:56.099999999999994px;width:184.9px;height:0.7px;background:#fff;"></div><div style="position:absolute;left:18.7px;top:67.4px;width:184.9px;height:0.7px;background:#fff;"></div><div style="position:absolute;left:18.7px;top:78.7px;width:184.9px;height:0.7px;background:#fff;"></div><div style="position:absolute;left:18.7px;top:90.0px;width:184.9px;height:0.7px;background:#fff;"></div><div style="position:absolute;left:18.7px;top:101.3px;width:184.9px;height:0.7px;background:#fff;"></div><div style="position:absolute;left:-58.4px;width:200px;text-align:center;top:34.94px;font-size:4.2px;line-height:1;font-weight:400;color:#333;letter-spacing:0px;white-space:nowrap;">Last name</div><div style="position:absolute;left:-12.400000000000006px;width:200px;text-align:center;top:34.94px;font-size:4.2px;line-height:1;font-weight:400;color:#333;letter-spacing:0px;white-space:nowrap;">Sales</div><div style="position:absolute;left:33.69999999999999px;width:200px;text-align:center;top:34.94px;font-size:4.2px;line-height:1;font-weight:400;color:#333;letter-spacing:0px;white-space:nowrap;">Country</div><div style="position:absolute;left:80px;width:200px;text-align:center;top:34.94px;font-size:4.2px;line-height:1;font-weight:400;color:#333;letter-spacing:0px;white-space:nowrap;">Quarter</div><div style="position:absolute;left:-58.4px;width:200px;text-align:center;top:48.84px;font-size:4.2px;line-height:1;font-weight:700;color:#fff;letter-spacing:0px;white-space:nowrap;">Smith</div><div style="position:absolute;left:-12.400000000000006px;width:200px;text-align:center;top:49.01px;font-size:4.0px;line-height:1;font-weight:400;color:#555;letter-spacing:0px;white-space:nowrap;">$ 1, 753.00</div><div style="position:absolute;left:33.69999999999999px;width:200px;text-align:center;top:49.01px;font-size:4.0px;line-height:1;font-weight:400;color:#555;letter-spacing:0px;white-space:nowrap;">UK</div><div style="position:absolute;left:80px;width:200px;text-align:center;top:49.01px;font-size:4.0px;line-height:1;font-weight:400;color:#555;letter-spacing:0px;white-space:nowrap;">Q1</div><div style="position:absolute;left:-58.4px;width:200px;text-align:center;top:60.14px;font-size:4.2px;line-height:1;font-weight:700;color:#fff;letter-spacing:0px;white-space:nowrap;">Johnson</div><div style="position:absolute;left:-12.400000000000006px;width:200px;text-align:center;top:60.31px;font-size:4.0px;line-height:1;font-weight:400;color:#555;letter-spacing:0px;white-space:nowrap;">$ 1, 753.00</div><div style="position:absolute;left:33.69999999999999px;width:200px;text-align:center;top:60.31px;font-size:4.0px;line-height:1;font-weight:400;color:#555;letter-spacing:0px;white-space:nowrap;">UK</div><div style="position:absolute;left:80px;width:200px;text-align:center;top:60.31px;font-size:4.0px;line-height:1;font-weight:400;color:#555;letter-spacing:0px;white-space:nowrap;">Q1</div><div style="position:absolute;left:-58.4px;width:200px;text-align:center;top:71.44px;font-size:4.2px;line-height:1;font-weight:700;color:#fff;letter-spacing:0px;white-space:nowrap;">Emma</div><div style="position:absolute;left:-12.400000000000006px;width:200px;text-align:center;top:71.61px;font-size:4.0px;line-height:1;font-weight:400;color:#555;letter-spacing:0px;white-space:nowrap;">$ 1, 753.00</div><div style="position:absolute;left:33.69999999999999px;width:200px;text-align:center;top:71.61px;font-size:4.0px;line-height:1;font-weight:400;color:#555;letter-spacing:0px;white-space:nowrap;">UK</div><div style="position:absolute;left:80px;width:200px;text-align:center;top:71.61px;font-size:4.0px;line-height:1;font-weight:400;color:#555;letter-spacing:0px;white-space:nowrap;">Q1</div><div style="position:absolute;left:-58.4px;width:200px;text-align:center;top:82.74px;font-size:4.2px;line-height:1;font-weight:700;color:#fff;letter-spacing:0px;white-space:nowrap;">Browns</div><div style="position:absolute;left:-12.400000000000006px;width:200px;text-align:center;top:82.91px;font-size:4.0px;line-height:1;font-weight:400;color:#555;letter-spacing:0px;white-space:nowrap;">$ 1, 753.00</div><div style="position:absolute;left:33.69999999999999px;width:200px;text-align:center;top:82.91px;font-size:4.0px;line-height:1;font-weight:400;color:#555;letter-spacing:0px;white-space:nowrap;">UK</div><div style="position:absolute;left:80px;width:200px;text-align:center;top:82.91px;font-size:4.0px;line-height:1;font-weight:400;color:#555;letter-spacing:0px;white-space:nowrap;">Q1</div><div style="position:absolute;left:-58.4px;width:200px;text-align:center;top:94.04px;font-size:4.2px;line-height:1;font-weight:700;color:#fff;letter-spacing:0px;white-space:nowrap;">Jones</div><div style="position:absolute;left:-12.400000000000006px;width:200px;text-align:center;top:94.21px;font-size:4.0px;line-height:1;font-weight:400;color:#555;letter-spacing:0px;white-space:nowrap;">$ 1, 753.00</div><div style="position:absolute;left:33.69999999999999px;width:200px;text-align:center;top:94.21px;font-size:4.0px;line-height:1;font-weight:400;color:#555;letter-spacing:0px;white-space:nowrap;">UK</div><div style="position:absolute;left:80px;width:200px;text-align:center;top:94.21px;font-size:4.0px;line-height:1;font-weight:400;color:#555;letter-spacing:0px;white-space:nowrap;">Q1</div><div style="position:absolute;left:-58.4px;width:200px;text-align:center;top:105.34px;font-size:4.2px;line-height:1;font-weight:700;color:#fff;letter-spacing:0px;white-space:nowrap;">Clara</div><div style="position:absolute;left:-12.400000000000006px;width:200px;text-align:center;top:105.51px;font-size:4.0px;line-height:1;font-weight:400;color:#555;letter-spacing:0px;white-space:nowrap;">$ 1, 753.00</div><div style="position:absolute;left:33.69999999999999px;width:200px;text-align:center;top:105.51px;font-size:4.0px;line-height:1;font-weight:400;color:#555;letter-spacing:0px;white-space:nowrap;">UK</div><div style="position:absolute;left:80px;width:200px;text-align:center;top:105.51px;font-size:4.0px;line-height:1;font-weight:400;color:#555;letter-spacing:0px;white-space:nowrap;">Q1</div></div>
<div class="a t" style="top:1009.84px;font-size:20.5px;font-weight:700;color:#222;left:-962.50px;width:2000px;text-align:center;">6</div>
<div class="a" style="left:60px;top:1173.8px;width:220px;height:126.4px;background:#fff;box-shadow:0 1px 3px rgba(0,0,0,0.28);overflow:hidden;"><div style="position:absolute;left:9.8px;top:10px;width:5.0px;height:5.0px;background:#fe0000;transform:rotate(45deg);border-radius:1px;"></div><div style="position:absolute;left:7.8px;top:14.2px;width:3.5px;height:3.5px;background:#ffd000;transform:rotate(45deg);"></div><div style="position:absolute;left:9.4px;top:17.5px;width:6.0px;height:6.0px;background:#00a4b8;transform:rotate(45deg);border-radius:1px;"></div><div style="position:absolute;left:17.9px;top:15.53px;font-size:7.4px;line-height:1;font-weight:700;color:#333;letter-spacing:-0.3px;white-space:nowrap;">TOTAL PURCHASE OF GOODS - 2018</div><div style="position:absolute;left:13.5px;top:29.7px;width:193.7px;height:17.6px;background:#dc7f8c;"></div><div style="position:absolute;left:13.5px;top:47.3px;width:51px;height:70px;background:#d9808c;"></div><div style="position:absolute;left:64.5px;top:47.3px;width:142.7px;height:11.67px;background:#f9d8dd;"></div><div style="position:absolute;left:64.5px;top:47.3px;width:142.7px;height:0.6px;background:#e58b97;"></div><div style="position:absolute;left:64.5px;top:58.97px;width:142.7px;height:11.67px;background:#ffffff;"></div><div style="position:absolute;left:64.5px;top:58.97px;width:142.7px;height:0.6px;background:#e58b97;"></div><div style="position:absolute;left:64.5px;top:70.64px;width:142.7px;height:11.67px;background:#f9d8dd;"></div><div style="position:absolute;left:64.5px;top:70.64px;width:142.7px;height:0.6px;background:#e58b97;"></div><div style="position:absolute;left:64.5px;top:82.31px;width:142.7px;height:11.67px;background:#ffffff;"></div><div style="position:absolute;left:64.5px;top:82.31px;width:142.7px;height:0.6px;background:#e58b97;"></div><div style="position:absolute;left:64.5px;top:93.97999999999999px;width:142.7px;height:11.67px;background:#f9d8dd;"></div><div style="position:absolute;left:64.5px;top:93.97999999999999px;width:142.7px;height:0.6px;background:#e58b97;"></div><div style="position:absolute;left:64.5px;top:105.65px;width:142.7px;height:11.67px;background:#ffffff;"></div><div style="position:absolute;left:64.5px;top:105.65px;width:142.7px;height:0.6px;background:#e58b97;"></div><div style="position:absolute;left:99.5px;top:47.3px;width:0.6px;height:70px;background:#e58b97;"></div><div style="position:absolute;left:130.5px;top:47.3px;width:0.6px;height:70px;background:#e58b97;"></div><div style="position:absolute;left:161.5px;top:47.3px;width:0.6px;height:70px;background:#e58b97;"></div><div style="position:absolute;left:-61px;width:200px;text-align:center;top:37.95px;font-size:3.6px;line-height:1;font-weight:700;color:#fff;letter-spacing:0px;white-space:nowrap;">Destination</div><div style="position:absolute;left:-18px;width:200px;text-align:center;top:37.95px;font-size:3.6px;line-height:1;font-weight:700;color:#fff;letter-spacing:0px;white-space:nowrap;">Electronics</div><div style="position:absolute;left:15px;width:200px;text-align:center;top:37.95px;font-size:3.6px;line-height:1;font-weight:700;color:#fff;letter-spacing:0px;white-space:nowrap;">Furniture</div><div style="position:absolute;left:46px;width:200px;text-align:center;top:37.95px;font-size:3.6px;line-height:1;font-weight:700;color:#fff;letter-spacing:0px;white-space:nowrap;">Toys</div><div style="position:absolute;left:84px;width:200px;text-align:center;top:37.95px;font-size:3.6px;line-height:1;font-weight:700;color:#fff;letter-spacing:0px;white-space:nowrap;">Miscellaneous</div><div style="position:absolute;left:33px;top:51.8px;width:12px;height:1.1px;background:#f3d0d5;"></div><div style="position:absolute;left:79px;top:51.8px;width:6px;height:1.0px;background:#b5b5b5;"></div><div style="position:absolute;left:112px;top:51.8px;width:6px;height:1.0px;background:#b5b5b5;"></div><div style="position:absolute;left:143px;top:51.8px;width:6px;height:1.0px;background:#b5b5b5;"></div><div style="position:absolute;left:181px;top:51.8px;width:6px;height:1.0px;background:#b5b5b5;"></div><div style="position:absolute;left:33px;top:63.47px;width:12px;height:1.1px;background:#f3d0d5;"></div><div style="position:absolute;left:79px;top:63.47px;width:6px;height:1.0px;background:#b5b5b5;"></div><div style="position:absolute;left:112px;top:63.47px;width:6px;height:1.0px;background:#b5b5b5;"></div><div style="position:absolute;left:143px;top:63.47px;width:6px;height:1.0px;background:#b5b5b5;"></div><div style="position:absolute;left:181px;top:63.47px;width:6px;height:1.0px;background:#b5b5b5;"></div><div style="position:absolute;left:33px;top:75.14px;width:12px;height:1.1px;background:#f3d0d5;"></div><div style="position:absolute;left:79px;top:75.14px;width:6px;height:1.0px;background:#b5b5b5;"></div><div style="position:absolute;left:112px;top:75.14px;width:6px;height:1.0px;background:#b5b5b5;"></div><div style="position:absolute;left:143px;top:75.14px;width:6px;height:1.0px;background:#b5b5b5;"></div><div style="position:absolute;left:181px;top:75.14px;width:6px;height:1.0px;background:#b5b5b5;"></div><div style="position:absolute;left:33px;top:86.81px;width:12px;height:1.1px;background:#f3d0d5;"></div><div style="position:absolute;left:79px;top:86.81px;width:6px;height:1.0px;background:#b5b5b5;"></div><div style="position:absolute;left:112px;top:86.81px;width:6px;height:1.0px;background:#b5b5b5;"></div><div style="position:absolute;left:143px;top:86.81px;width:6px;height:1.0px;background:#b5b5b5;"></div><div style="position:absolute;left:181px;top:86.81px;width:6px;height:1.0px;background:#b5b5b5;"></div><div style="position:absolute;left:33px;top:98.47999999999999px;width:12px;height:1.1px;background:#f3d0d5;"></div><div style="position:absolute;left:79px;top:98.47999999999999px;width:6px;height:1.0px;background:#b5b5b5;"></div><div style="position:absolute;left:112px;top:98.47999999999999px;width:6px;height:1.0px;background:#b5b5b5;"></div><div style="position:absolute;left:143px;top:98.47999999999999px;width:6px;height:1.0px;background:#b5b5b5;"></div><div style="position:absolute;left:181px;top:98.47999999999999px;width:6px;height:1.0px;background:#b5b5b5;"></div><div style="position:absolute;left:33px;top:110.15px;width:12px;height:1.1px;background:#f3d0d5;"></div><div style="position:absolute;left:79px;top:110.15px;width:6px;height:1.0px;background:#b5b5b5;"></div><div style="position:absolute;left:112px;top:110.15px;width:6px;height:1.0px;background:#b5b5b5;"></div><div style="position:absolute;left:143px;top:110.15px;width:6px;height:1.0px;background:#b5b5b5;"></div><div style="position:absolute;left:181px;top:110.15px;width:6px;height:1.0px;background:#b5b5b5;"></div></div>
<div class="a t" style="top:1175.44px;font-size:20.5px;font-weight:400;color:#4a4a4a;left:-962.50px;width:2000px;text-align:center;">7</div>
<div class="a" style="left:60px;top:1338.8px;width:220px;height:126.4px;background:#fff;box-shadow:0 1px 3px rgba(0,0,0,0.28);overflow:hidden;"><div style="position:absolute;left:10.0px;top:9px;width:5.0px;height:5.0px;background:#fe0000;transform:rotate(45deg);border-radius:1px;"></div><div style="position:absolute;left:8px;top:13.2px;width:3.5px;height:3.5px;background:#ffd000;transform:rotate(45deg);"></div><div style="position:absolute;left:9.6px;top:16.5px;width:6.0px;height:6.0px;background:#00a4b8;transform:rotate(45deg);border-radius:1px;"></div><div style="position:absolute;left:17.9px;top:12.44px;font-size:6.8px;line-height:1;font-weight:700;color:#555;letter-spacing:0.05px;white-space:nowrap;">POPULATION</div><div style="position:absolute;left:25.3px;top:26.7px;width:170px;height:25.7px;background:#424242;"></div><div style="position:absolute;left:10.5px;width:200px;text-align:center;top:33.92px;font-size:8.6px;line-height:1;font-weight:700;color:#fff;letter-spacing:-0.2px;white-space:nowrap;font-family:'Liberation Serif',serif;">POPULATION RATE</div><div style="position:absolute;left:103px;top:44px;width:15px;height:1.2px;background:#bbb;"></div><div style="position:absolute;left:25.3px;top:52.4px;width:41.6px;height:59.1px;background:#d6d6d6;"></div><div style="position:absolute;left:66.9px;top:52.4px;width:43.3px;height:59.1px;background:#f1f1f1;"></div><div style="position:absolute;left:110.2px;top:52.4px;width:41.9px;height:59.1px;background:#d6d6d6;"></div><div style="position:absolute;left:152.1px;top:52.4px;width:43.2px;height:59.1px;background:#f1f1f1;"></div><div style="position:absolute;left:-54px;width:200px;text-align:center;top:79.76px;font-size:5.6px;line-height:1;font-weight:700;color:#2a3a5a;letter-spacing:0px;white-space:nowrap;font-family:'Liberation Serif',serif;">2017</div><div style="position:absolute;left:31px;width:200px;text-align:center;top:79.76px;font-size:5.6px;line-height:1;font-weight:700;color:#2a3a5a;letter-spacing:0px;white-space:nowrap;font-family:'Liberation Serif',serif;">2018</div><div style="position:absolute;left:80px;top:60.5px;width:16px;height:1.2px;background:#aaa;"></div><div style="position:absolute;left:165px;top:60.5px;width:16px;height:1.2px;background:#aaa;"></div><div style="position:absolute;left:80px;top:75px;width:16px;height:1.2px;background:#aaa;"></div><div style="position:absolute;left:165px;top:75px;width:16px;height:1.2px;background:#aaa;"></div><div style="position:absolute;left:80px;top:89.5px;width:16px;height:1.2px;background:#aaa;"></div><div style="position:absolute;left:165px;top:89.5px;width:16px;height:1.2px;background:#aaa;"></div><div style="position:absolute;left:80px;top:104px;width:16px;height:1.2px;background:#aaa;"></div><div style="position:absolute;left:165px;top:104px;width:16px;height:1.2px;background:#aaa;"></div></div>
<div class="a t" style="top:1340.44px;font-size:20.5px;font-weight:400;color:#4a4a4a;left:-962.50px;width:2000px;text-align:center;">8</div>
<div class="a" style="left:60px;top:1504.2px;width:220px;height:126.4px;background:#fff;box-shadow:0 1px 3px rgba(0,0,0,0.28);overflow:hidden;"><div style="position:absolute;left:10.0px;top:9px;width:5.0px;height:5.0px;background:#fe0000;transform:rotate(45deg);border-radius:1px;"></div><div style="position:absolute;left:8px;top:13.2px;width:3.5px;height:3.5px;background:#ffd000;transform:rotate(45deg);"></div><div style="position:absolute;left:9.6px;top:16.5px;width:6.0px;height:6.0px;background:#00a4b8;transform:rotate(45deg);border-radius:1px;"></div><div style="position:absolute;left:17.9px;top:12.64px;font-size:6.8px;line-height:1;font-weight:700;color:#333;letter-spacing:0.05px;white-space:nowrap;">MERGE/SPLIT CELLS</div><div style="position:absolute;left:27.4px;top:35.8px;width:170.3px;height:17.2px;background:#17a2b8;"></div><div style="position:absolute;left:12.5px;width:200px;text-align:center;top:41.92px;font-size:8.6px;line-height:1;font-weight:700;color:#fff;letter-spacing:-0.2px;white-space:nowrap;font-family:'Liberation Serif',serif;">POPULATION RATE</div><div style="position:absolute;left:27.4px;top:53px;width:21.6px;height:80px;background:#333333;"></div><div style="position:absolute;left:49px;top:53px;width:61.2px;height:80px;background:#fdf6dc;"></div><div style="position:absolute;left:110.2px;top:53px;width:20.9px;height:80px;background:#333333;"></div><div style="position:absolute;left:131.1px;top:53px;width:66.6px;height:80px;background:#fdf6dc;"></div><div style="position:absolute;left:-62px;width:200px;text-align:center;top:81.94px;font-size:4.8px;line-height:1;font-weight:700;color:#f5c518;letter-spacing:0px;white-space:nowrap;font-family:'Liberation Serif',serif;">2017</div><div style="position:absolute;left:20.599999999999994px;width:200px;text-align:center;top:81.94px;font-size:4.8px;line-height:1;font-weight:700;color:#f5c518;letter-spacing:0px;white-space:nowrap;font-family:'Liberation Serif',serif;">2018</div><div style="position:absolute;left:72px;top:61px;width:14px;height:1.2px;background:#aaa;"></div><div style="position:absolute;left:157px;top:61px;width:14px;height:1.2px;background:#aaa;"></div><div style="position:absolute;left:72px;top:75px;width:14px;height:1.2px;background:#aaa;"></div><div style="position:absolute;left:157px;top:75px;width:14px;height:1.2px;background:#aaa;"></div><div style="position:absolute;left:72px;top:89px;width:14px;height:1.2px;background:#aaa;"></div><div style="position:absolute;left:157px;top:89px;width:14px;height:1.2px;background:#aaa;"></div></div>
<div class="a t" style="top:1505.84px;font-size:20.5px;font-weight:400;color:#4a4a4a;left:-962.50px;width:2000px;text-align:center;">9</div>
<div class="a" style="left:367.6px;top:323.3px;width:1928.4px;height:1084.7px;background:#fff;box-shadow:0 0 3px rgba(0,0,0,0.18), 0 2px 4px rgba(0,0,0,0.08);"></div>
<div class="a" style="left:443.15px;top:399.45px;width:40.5px;height:40.5px;background:#fe0000;border-radius:5px;transform:rotate(45deg);"></div>
<div class="a" style="left:423.80px;top:439.10px;width:27.8px;height:27.8px;background:#ffd200;border-radius:4px;transform:rotate(45deg);"></div>
<div class="a" style="left:440.65px;top:468.45px;width:45.5px;height:45.5px;background:#00a3b8;border-radius:6px;transform:rotate(45deg);"></div>
<div class="a t" style="top:425.69px;font-size:64.5px;font-weight:700;color:#3d3d3d;letter-spacing:-2.65px;left:521px;">QUARTERLY SALES REVENUE</div>
<div class="a" style="left:498px;top:532px;width:1697px;height:803px;background:#dfe9f8;border:1.5px solid #c9d8f3;box-sizing:border-box;"></div>
<div class="a" style="left:514px;top:548px;width:1664px;height:770px;background:#fff;border:1.5px solid #c9d8f3;box-sizing:border-box;"></div>
<div class="a" style="left:2176.5px;top:539px;width:3.2px;height:3.2px;background:#3a4a58;border-radius:0.5px;"></div>
<div class="a" style="left:2185px;top:539px;width:3.2px;height:3.2px;background:#3a4a58;border-radius:0.5px;"></div>
<div class="a" style="left:2185px;top:546.5px;width:3.2px;height:3.2px;background:#3a4a58;border-radius:0.5px;"></div>
<div class="a" style="left:504px;top:1316px;width:3.2px;height:3.2px;background:#3a4a58;border-radius:0.5px;"></div>
<div class="a" style="left:504px;top:1324.5px;width:3.2px;height:3.2px;background:#3a4a58;border-radius:0.5px;"></div>
<div class="a" style="left:512.5px;top:1324.5px;width:3.2px;height:3.2px;background:#3a4a58;border-radius:0.5px;"></div>
<div class="a" style="left:2185px;top:1316px;width:3.2px;height:3.2px;background:#3a4a58;border-radius:0.5px;"></div>
<div class="a" style="left:2176.5px;top:1324.5px;width:3.2px;height:3.2px;background:#3a4a58;border-radius:0.5px;"></div>
<div class="a" style="left:2185px;top:1324.5px;width:3.2px;height:3.2px;background:#3a4a58;border-radius:0.5px;"></div>
<div class="a" style="left:518px;top:552px;width:412px;height:156.89999999999998px;background:#f6d046;"></div>
<div class="a" style="left:933px;top:552px;width:412px;height:156.89999999999998px;background:#f6d046;"></div>
<div class="a" style="left:1348px;top:552px;width:412px;height:156.89999999999998px;background:#f6d046;"></div>
<div class="a" style="left:1763px;top:552px;width:412px;height:156.89999999999998px;background:#f6d046;"></div>
<div class="a t" style="top:613.93px;font-size:37.4px;font-weight:400;color:#0a0a0a;letter-spacing:1.1px;left:-275.45px;width:2000px;text-align:center;-webkit-text-stroke:0.7px #0a0a0a;">Last name</div>
<div class="a t" style="top:613.93px;font-size:37.4px;font-weight:400;color:#0a0a0a;letter-spacing:1.1px;left:139.55px;width:2000px;text-align:center;-webkit-text-stroke:0.7px #0a0a0a;">Sales</div>
<div class="a t" style="top:613.93px;font-size:37.4px;font-weight:400;color:#0a0a0a;letter-spacing:1.1px;left:554.55px;width:2000px;text-align:center;-webkit-text-stroke:0.7px #0a0a0a;">Country</div>
<div class="a t" style="top:613.93px;font-size:37.4px;font-weight:400;color:#0a0a0a;letter-spacing:1.1px;left:969.55px;width:2000px;text-align:center;-webkit-text-stroke:0.7px #0a0a0a;">Quarter</div>
<div class="a" style="left:518px;top:712.5px;width:412px;height:98.75px;background:#404040;"></div>
<div class="a" style="left:933px;top:712.5px;width:412px;height:98.75px;background:#e8e7ec;"></div>
<div class="a" style="left:1348px;top:712.5px;width:412px;height:98.75px;background:#d0cfd4;"></div>
<div class="a" style="left:1763px;top:712.5px;width:412px;height:98.75px;background:#e8e7ec;"></div>
<div class="a t" style="top:746.07px;font-size:33.7px;font-weight:700;color:#ffffff;letter-spacing:-1.1px;left:-276.55px;width:2000px;text-align:center;">Smith</div>
<div class="a t" style="top:746.32px;font-size:33.4px;font-weight:400;color:#0a0a0a;letter-spacing:0.9px;left:139.45px;width:2000px;text-align:center;transform:scaleX(0.87);">$16, 753.00</div>
<div class="a t" style="top:746.32px;font-size:33.4px;font-weight:400;color:#0a0a0a;letter-spacing:0.3px;left:554.15px;width:2000px;text-align:center;transform:scaleX(0.85);">UK</div>
<div class="a t" style="top:746.32px;font-size:33.4px;font-weight:400;color:#0a0a0a;letter-spacing:0.3px;left:969.15px;width:2000px;text-align:center;transform:scaleX(0.87);">Q1</div>
<div class="a" style="left:518px;top:814.75px;width:412px;height:96.8px;background:#404040;"></div>
<div class="a" style="left:933px;top:814.75px;width:412px;height:96.8px;background:#e8e7ec;"></div>
<div class="a" style="left:1348px;top:814.75px;width:412px;height:96.8px;background:#d0cfd4;"></div>
<div class="a" style="left:1763px;top:814.75px;width:412px;height:96.8px;background:#e8e7ec;"></div>
<div class="a t" style="top:848.32px;font-size:33.7px;font-weight:700;color:#ffffff;letter-spacing:-1.1px;left:-276.55px;width:2000px;text-align:center;">Johnson</div>
<div class="a t" style="top:848.57px;font-size:33.4px;font-weight:400;color:#0a0a0a;letter-spacing:0.9px;left:139.45px;width:2000px;text-align:center;transform:scaleX(0.87);">$14, 808.00</div>
<div class="a t" style="top:848.57px;font-size:33.4px;font-weight:400;color:#0a0a0a;letter-spacing:0.3px;left:554.15px;width:2000px;text-align:center;transform:scaleX(0.85);">USA</div>
<div class="a t" style="top:848.57px;font-size:33.4px;font-weight:400;color:#0a0a0a;letter-spacing:0.3px;left:969.15px;width:2000px;text-align:center;transform:scaleX(0.87);">Q3</div>
<div class="a" style="left:518px;top:915.05px;width:412px;height:96.8px;background:#404040;"></div>
<div class="a" style="left:933px;top:915.05px;width:412px;height:96.8px;background:#e8e7ec;"></div>
<div class="a" style="left:1348px;top:915.05px;width:412px;height:96.8px;background:#d0cfd4;"></div>
<div class="a" style="left:1763px;top:915.05px;width:412px;height:96.8px;background:#e8e7ec;"></div>
<div class="a t" style="top:948.62px;font-size:33.7px;font-weight:700;color:#ffffff;letter-spacing:-1.1px;left:-276.55px;width:2000px;text-align:center;">Emma</div>
<div class="a t" style="top:948.87px;font-size:33.4px;font-weight:400;color:#0a0a0a;letter-spacing:0.9px;left:139.45px;width:2000px;text-align:center;transform:scaleX(0.87);">$10, 543.00</div>
<div class="a t" style="top:948.87px;font-size:33.4px;font-weight:400;color:#0a0a0a;letter-spacing:0.3px;left:554.15px;width:2000px;text-align:center;transform:scaleX(0.85);">UK</div>
<div class="a t" style="top:948.87px;font-size:33.4px;font-weight:400;color:#0a0a0a;letter-spacing:0.3px;left:969.15px;width:2000px;text-align:center;transform:scaleX(0.87);">Q2</div>
<div class="a" style="left:518px;top:1015.35px;width:412px;height:96.9px;background:#404040;"></div>
<div class="a" style="left:933px;top:1015.35px;width:412px;height:96.9px;background:#e8e7ec;"></div>
<div class="a" style="left:1348px;top:1015.35px;width:412px;height:96.9px;background:#d0cfd4;"></div>
<div class="a" style="left:1763px;top:1015.35px;width:412px;height:96.9px;background:#e8e7ec;"></div>
<div class="a t" style="top:1048.92px;font-size:33.7px;font-weight:700;color:#ffffff;letter-spacing:-1.1px;left:-276.55px;width:2000px;text-align:center;">Browns</div>
<div class="a t" style="top:1049.17px;font-size:33.4px;font-weight:400;color:#0a0a0a;letter-spacing:0.9px;left:139.45px;width:2000px;text-align:center;transform:scaleX(0.87);">$ 7, 753.00</div>
<div class="a t" style="top:1049.17px;font-size:33.4px;font-weight:400;color:#0a0a0a;letter-spacing:0.3px;left:554.15px;width:2000px;text-align:center;transform:scaleX(0.85);">USA</div>
<div class="a t" style="top:1049.17px;font-size:33.4px;font-weight:400;color:#0a0a0a;letter-spacing:0.3px;left:969.15px;width:2000px;text-align:center;transform:scaleX(0.87);">Q4</div>
<div class="a" style="left:518px;top:1115.75px;width:412px;height:96.8px;background:#404040;"></div>
<div class="a" style="left:933px;top:1115.75px;width:412px;height:96.8px;background:#e8e7ec;"></div>
<div class="a" style="left:1348px;top:1115.75px;width:412px;height:96.8px;background:#d0cfd4;"></div>
<div class="a" style="left:1763px;top:1115.75px;width:412px;height:96.8px;background:#e8e7ec;"></div>
<div class="a t" style="top:1149.32px;font-size:33.7px;font-weight:700;color:#ffffff;letter-spacing:-1.1px;left:-276.55px;width:2000px;text-align:center;">Jones</div>
<div class="a t" style="top:1149.57px;font-size:33.4px;font-weight:400;color:#0a0a0a;letter-spacing:0.9px;left:139.45px;width:2000px;text-align:center;transform:scaleX(0.87);">$ 2, 530.00</div>
<div class="a t" style="top:1149.57px;font-size:33.4px;font-weight:400;color:#0a0a0a;letter-spacing:0.3px;left:554.15px;width:2000px;text-align:center;transform:scaleX(0.85);">UK</div>
<div class="a t" style="top:1149.57px;font-size:33.4px;font-weight:400;color:#0a0a0a;letter-spacing:0.3px;left:969.15px;width:2000px;text-align:center;transform:scaleX(0.87);">Q1</div>
<div class="a" style="left:518px;top:1216.05px;width:412px;height:96.45px;background:#404040;"></div>
<div class="a" style="left:933px;top:1216.05px;width:412px;height:96.45px;background:#e8e7ec;"></div>
<div class="a" style="left:1348px;top:1216.05px;width:412px;height:96.45px;background:#d0cfd4;"></div>
<div class="a" style="left:1763px;top:1216.05px;width:412px;height:96.45px;background:#e8e7ec;"></div>
<div class="a t" style="top:1249.62px;font-size:33.7px;font-weight:700;color:#ffffff;letter-spacing:-1.1px;left:-276.55px;width:2000px;text-align:center;">Clara</div>
<div class="a t" style="top:1249.87px;font-size:33.4px;font-weight:400;color:#0a0a0a;letter-spacing:0.9px;left:139.45px;width:2000px;text-align:center;transform:scaleX(0.87);">$ 1, 945.00</div>
<div class="a t" style="top:1249.87px;font-size:33.4px;font-weight:400;color:#0a0a0a;letter-spacing:0.3px;left:554.15px;width:2000px;text-align:center;transform:scaleX(0.85);">USA</div>
<div class="a t" style="top:1249.87px;font-size:33.4px;font-weight:400;color:#0a0a0a;letter-spacing:0.3px;left:969.15px;width:2000px;text-align:center;transform:scaleX(0.87);">Q3</div>
<div class="a" style="left:515px;top:442px;width:139px;height:59px;background:#505050;border-radius:5px;border:1px solid #3a3a3a;box-sizing:border-box;"></div>
<svg class="a" style="left:536.5px;top:456px;" width="26" height="33" viewBox="0 0 26 33"><path d="M1.5 5 H10.5 M6 0.5 V9.5" stroke="#fff" stroke-width="1.8"/><rect x="2" y="15" width="8.5" height="17" fill="none" stroke="#21c3f0" stroke-width="1.8"/><path d="M2 23.5 H10.5" stroke="#21c3f0" stroke-width="1.8"/><rect x="16" y="5" width="8.5" height="17" fill="none" stroke="#fff" stroke-width="1.8"/><path d="M16 13.5 H24.5" stroke="#fff" stroke-width="1.8"/></svg>
<div class="a" style="left:584.5px;top:462px;width:1px;height:22px;background:#8a8a8a;"></div>
<svg class="a" style="left:605px;top:456px;" width="26" height="33" viewBox="0 0 26 33"><path d="M15.5 5 H24.5 M20 0.5 V9.5" stroke="#fff" stroke-width="1.8"/><rect x="1.5" y="5" width="8.5" height="17" fill="none" stroke="#fff" stroke-width="1.8"/><path d="M1.5 13.5 H10" stroke="#fff" stroke-width="1.8"/><rect x="15.5" y="15" width="8.5" height="17" fill="none" stroke="#21c3f0" stroke-width="1.8"/><path d="M15.5 23.5 H24" stroke="#21c3f0" stroke-width="1.8"/></svg>
<div class="a" style="left:408px;top:548px;width:60px;height:140px;background:#505050;border-radius:5px;border:1px solid #3a3a3a;box-sizing:border-box;"></div>
<svg class="a" style="left:422px;top:571.5px;" width="33" height="25" viewBox="0 0 33 25"><rect x="1" y="1" width="17" height="8" fill="none" stroke="#21c3f0" stroke-width="1.8"/><path d="M9.5 1 V9" stroke="#21c3f0" stroke-width="1.8"/><path d="M22 5 H31 M26.5 0.5 V9.5" stroke="#fff" stroke-width="1.8"/><rect x="11" y="15" width="17" height="8" fill="none" stroke="#fff" stroke-width="1.8"/><path d="M19.5 15 V23" stroke="#fff" stroke-width="1.8"/></svg>
<div class="a" style="left:427px;top:617.5px;width:24px;height:1.5px;background:#8a8a8a;"></div>
<svg class="a" style="left:422px;top:640px;" width="33" height="25" viewBox="0 0 33 25"><rect x="11" y="1" width="17" height="8" fill="none" stroke="#fff" stroke-width="1.8"/><path d="M19.5 1 V9" stroke="#fff" stroke-width="1.8"/><rect x="1" y="15" width="17" height="8" fill="none" stroke="#21c3f0" stroke-width="1.8"/><path d="M9.5 15 V23" stroke="#21c3f0" stroke-width="1.8"/><path d="M22 19 H31 M26.5 14.5 V23.5" stroke="#fff" stroke-width="1.8"/></svg>
<div class="a t" style="top:163.65px;font-size:26.4px;font-weight:400;color:#e8523f;letter-spacing:0.05px;left:2470px;">Table</div>
<div class="a" style="left:2466px;top:198px;width:72px;height:5.5px;background:#e8523f;"></div>
<div class="a t" style="top:163.65px;font-size:26.4px;font-weight:400;color:#555;letter-spacing:0.1px;left:2568px;">Text</div>
<div class="a t" style="top:163.65px;font-size:26.4px;font-weight:400;color:#555;letter-spacing:0.15px;left:2652px;">Arrange</div>
<div class="a" style="left:2371px;top:227px;width:214px;height:32.5px;background:#d33a53;"></div>
<div class="a" style="left:2371px;top:260px;width:214px;height:105px;background:#f5e4e8;"></div>
<div class="a" style="left:2424.5px;top:227px;width:1px;height:138px;background:rgba(255,255,255,0.75);"></div>
<div class="a" style="left:2478px;top:227px;width:1px;height:138px;background:rgba(255,255,255,0.75);"></div>
<div class="a" style="left:2531.5px;top:227px;width:1px;height:138px;background:rgba(255,255,255,0.75);"></div>
<div class="a" style="left:2371px;top:259.5px;width:214px;height:1px;background:rgba(255,255,255,0.9);"></div>
<div class="a" style="left:2371px;top:296px;width:214px;height:1px;background:rgba(255,255,255,0.9);"></div>
<div class="a" style="left:2371px;top:331px;width:214px;height:1px;background:rgba(255,255,255,0.9);"></div>
<div class="a" style="left:2630px;top:226px;width:216px;height:34px;background:#d33a53;"></div>
<div class="a" style="left:2630px;top:261px;width:216px;height:106px;background:linear-gradient(180deg,#ffd6dc 0%,#ffc4cc 50%,#ffaab5 100%);border:1px solid #d9546a;border-top:none;box-sizing:border-box;"></div>
<div class="a" style="left:2684.5px;top:261px;width:1px;height:106px;background:#d9546a;"></div>
<div class="a" style="left:2738.5px;top:261px;width:1px;height:106px;background:#d9546a;"></div>
<div class="a" style="left:2792.5px;top:261px;width:1px;height:106px;background:#d9546a;"></div>
<div class="a" style="left:2630px;top:296px;width:216px;height:1px;background:#d9546a;"></div>
<div class="a" style="left:2630px;top:331px;width:216px;height:1px;background:#d9546a;"></div>
<div class="a t" style="top:393.99px;font-size:20.8px;font-weight:400;color:#e8523f;letter-spacing:1.1px;left:2773px;">More...</div>
<div class="a" style="left:2339px;top:432px;width:538px;height:1px;background:#e6e6e6;"></div>
<div class="a t" style="top:455.32px;font-size:24.9px;font-weight:400;color:#333;letter-spacing:0.37px;left:2369px;-webkit-text-stroke:0.55px #333;">Header &amp; Footer</div>
<div class="a" style="left:2368px;top:498px;width:227px;height:45px;border:1.5px solid #dedede;border-radius:4px;box-sizing:border-box;background:linear-gradient(90deg,#eceef1 0,#eceef1 115px,#fff 115px);"></div>
<div class="a" style="left:2483px;top:499px;width:1.5px;height:43px;background:#dedede;"></div>
<div class="a" style="left:2618.5px;top:498px;width:226.5px;height:45px;border:1.5px solid #dedede;border-radius:4px;box-sizing:border-box;background:#fff;"></div>
<div class="a" style="left:2731px;top:499px;width:1.5px;height:43px;background:#dedede;"></div>
<svg class="a" style="left:2409px;top:507px;" width="34" height="28" viewBox="0 0 34 28"><rect x="1" y="0.7" width="32" height="6.3" fill="#15799a"/><path d="M1.8 10.5 H32.2 V26.2 H1.8 Z M1.8 18.3 H32.2 M12 10.5 V26.2 M22 10.5 V26.2" fill="none" stroke="#a9adb5" stroke-width="1.6"/></svg>
<svg class="a" style="left:2521px;top:507px;" width="34" height="28" viewBox="0 0 34 28"><path d="M1.8 1.3 H32.2 V17.8 H1.8 Z M1.8 9.5 H32.2 M12 1.3 V17.8 M22 1.3 V17.8" fill="none" stroke="#a9adb5" stroke-width="1.6"/><rect x="1" y="21" width="32" height="5.8" fill="#15799a"/></svg>
<svg class="a" style="left:2659px;top:507px;" width="32" height="28" viewBox="0 0 32 28"><rect x="0.7" y="1" width="6" height="26" fill="#15799a"/><path d="M10.3 1.8 H29.8 V26.2 H10.3 Z M20 1.8 V26.2 M10.3 9.8 H29.8 M10.3 18 H29.8" fill="none" stroke="#a9adb5" stroke-width="1.6"/></svg>
<svg class="a" style="left:2772px;top:507px;" width="32" height="28" viewBox="0 0 32 28"><path d="M1.3 1.8 H20.8 V26.2 H1.3 Z M11 1.8 V26.2 M1.3 9.8 H20.8 M1.3 18 H20.8" fill="none" stroke="#a9adb5" stroke-width="1.6"/><rect x="23.8" y="1" width="6.3" height="26" fill="#15799a"/></svg>
<div class="a" style="left:2374px;top:584px;width:456px;height:1px;background:#efefef;"></div>
<div class="a t" style="top:615.40px;font-size:24.8px;font-weight:400;color:#333;letter-spacing:0.95px;left:2368px;-webkit-text-stroke:0.55px #333;">Alternate</div>
<div class="a" style="left:2608px;top:619.5px;width:24px;height:24px;border:1.4px solid #e8523f;box-sizing:border-box;"></div>
<div class="a t" style="top:620.02px;font-size:23.6px;font-weight:400;color:#333;letter-spacing:-0.5px;left:2645px;">Row</div>
<svg class="a" style="left:2709px;top:619px;" width="26" height="26" viewBox="0 0 26 26"><path d="M14 1.2 H1.2 V24.3 H24.3 V11" fill="none" stroke="#e8523f" stroke-width="1.4"/><path d="M6.3 10.5 L12.6 16.8 L24 1.8" fill="none" stroke="#e8523f" stroke-width="1.6"/></svg>
<div class="a t" style="top:620.02px;font-size:23.6px;font-weight:400;color:#333;letter-spacing:1.0px;left:2747.4px;">Column</div>
<div class="a" style="left:2694px;top:592px;width:152px;height:80px;border:8px solid #ff0000;box-sizing:border-box;"></div>
<svg class="a" style="left:2560px;top:485px;" width="140" height="120" viewBox="0 0 140 120"><path d="M8.3 8.5 L102.5 72.9 L113.1 55.6 L129.9 110.4 L72.2 104.6 L87.1 91.6 Z" fill="#ff0000"/></svg>
<div class="a" style="left:2339px;top:687px;width:538px;height:1px;background:#e6e6e6;"></div>
<div class="a t" style="top:719.17px;font-size:24.6px;font-weight:400;color:#333;letter-spacing:0.85px;left:2368px;-webkit-text-stroke:0.55px #333;">Gridlines</div>
<div class="a" style="left:2492.5px;top:708.5px;width:236px;height:43px;border:1.5px solid #dcdcdc;border-radius:4px;box-sizing:border-box;background:#edeef2;"></div>
<div class="a" style="left:2611px;top:709.5px;width:1.5px;height:41.0px;background:#dcdcdc;"></div>
<svg class="a" style="left:2540px;top:720px;" width="22" height="24" viewBox="0 0 22 24"><path d="M3 2 V22 M11 2 V22 M19 2 V22" stroke="#333" stroke-width="2.2"/></svg>
<svg class="a" style="left:2656px;top:720px;" width="26" height="22" viewBox="0 0 26 22"><path d="M2 3 H24 M2 11 H24 M2 19 H24" stroke="#333" stroke-width="2.2"/></svg>
<div class="a" style="left:2743px;top:708.5px;width:108px;height:43px;border:1.5px solid #dcdcdc;border-radius:4px;box-sizing:border-box;background:linear-gradient(180deg,#fff,#f6f7f9);"></div>
<svg class="a" style="left:2765px;top:719px;" width="28" height="22" viewBox="0 0 28 22"><path d="M1.8 1.8 H25.8 V20.2 H1.8 Z M1.8 8.5 H25.8 M9.8 1.8 V8.5 M17.8 1.8 V8.5" fill="none" stroke="#333" stroke-width="2"/><path d="M2.5 14.3 H25" stroke="#ddd" stroke-width="1"/></svg>
<svg class="a" style="left:2808px;top:727px;" width="18" height="11" viewBox="0 0 18 11"><path d="M2 2 L9 9 L16 2" fill="none" stroke="#444" stroke-width="2.2"/></svg>
<div class="a" style="left:2339px;top:772px;width:538px;height:1px;background:#e6e6e6;"></div>
<div class="a" style="left:2368.5px;top:811px;width:229px;height:42px;border:1.5px solid #e6e6e6;border-radius:4px;box-sizing:border-box;background:#fff;"></div>
<div class="a t" style="top:820.32px;font-size:23.6px;font-weight:400;color:#a8a8a8;letter-spacing:-0.6px;left:1483.20px;width:2000px;text-align:center;">Merge Cells</div>
<div class="a" style="left:2618.5px;top:811px;width:229px;height:42px;border:1.5px solid #e6e6e6;border-radius:4px;box-sizing:border-box;background:#fff;"></div>
<div class="a t" style="top:820.32px;font-size:23.6px;font-weight:400;color:#a8a8a8;letter-spacing:-0.2px;left:1732.90px;width:2000px;text-align:center;">Split Cell</div>
<div class="a t" style="top:892.83px;font-size:25px;font-weight:400;color:#333;letter-spacing:0.68px;left:2368px;-webkit-text-stroke:0.55px #333;">Distribute cells</div>
<div class="a" style="left:2618.5px;top:884.5px;width:110px;height:43px;border:1.5px solid #dcdcdc;border-radius:4px;box-sizing:border-box;background:linear-gradient(180deg,#fff,#f3f4f7);"></div>
<div class="a" style="left:2736.5px;top:884.5px;width:111px;height:43px;border:1.5px solid #dcdcdc;border-radius:4px;box-sizing:border-box;background:linear-gradient(180deg,#fff,#f3f4f7);"></div>
<svg class="a" style="left:2658px;top:891px;" width="32" height="28" viewBox="0 0 32 28"><path d="M7 4 V24" stroke="#15799a" stroke-width="2.2"/><path d="M2.5 8.5 L7 3.5 L11.5 8.5 M2.5 19.5 L7 24.5 L11.5 19.5" fill="none" stroke="#15799a" stroke-width="2.2"/><path d="M19.3 2.3 H29 V26 H19.3 Z M19.3 10 H29 M19.3 18 H29" fill="none" stroke="#222" stroke-width="2"/></svg>
<svg class="a" style="left:2775px;top:892px;" width="36" height="28" viewBox="0 0 36 28"><path d="M2 2.5 H32.5 V11 H2 Z M12.3 2.5 V11 M22.3 2.5 V11" fill="none" stroke="#222" stroke-width="2"/><path d="M6 20.5 H29" stroke="#15799a" stroke-width="2.2"/><path d="M10 16 L5 20.5 L10 25 M25 16 L30 20.5 L25 25" fill="none" stroke="#15799a" stroke-width="2.2"/></svg>
<div class="a" style="left:2339px;top:959px;width:538px;height:1px;background:#e6e6e6;"></div>
<div class="a t" style="top:983.20px;font-size:22.2px;font-weight:400;color:#444;left:847.50px;width:2000px;text-align:right;">Table</div>
<svg class="a" style="left:2368px;top:1058px;" width="14" height="19" viewBox="0 0 14 19"><path d="M1 1 L13 9 L1 17 Z" fill="#666"/></svg>
<div class="a t" style="top:1055.39px;font-size:24.7px;font-weight:400;color:#222;letter-spacing:0.6px;left:2399px;-webkit-text-stroke:0.6px #222;">Fill</div>
<div class="a" style="left:2551px;top:1046.5px;width:214px;height:42.5px;border:1.5px solid #dcdcdc;border-radius:3px;box-sizing:border-box;background:linear-gradient(180deg,#fff,#f5f6f9);"></div>
<div class="a t" style="top:1058.43px;font-size:20.4px;font-weight:400;color:#222;letter-spacing:0.9px;left:2562px;">Solid Color</div>
<svg class="a" style="left:2739px;top:1064px;" width="16" height="10" viewBox="0 0 16 10"><path d="M1.5 1.5 L7.5 7.5 L13.5 1.5" fill="none" stroke="#333" stroke-width="1.8"/></svg>
<div class="a" style="left:2784.5px;top:1046.5px;width:63px;height:42.5px;border:1.5px solid #dcdcdc;border-radius:3px;box-sizing:border-box;background:#fff;"></div>
<div class="a" style="left:2788px;top:1049.5px;width:56px;height:36.5px;background:#f5d04a;"></div>
<svg class="a" style="left:2822px;top:1064px;" width="20" height="20" viewBox="0 0 20 20"><circle cx="10" cy="10" r="9.6" fill="#b39a3a"/><path d="M5.8 7.3 H14.2 L10 13.5 Z" fill="#fff"/></svg>
<div class="a" style="left:2368px;top:1110.5px;width:509px;height:1px;background:#eaeaea;"></div>
<svg class="a" style="left:2368px;top:1145px;" width="14" height="19" viewBox="0 0 14 19"><path d="M1 1 L13 9 L1 17 Z" fill="#666"/></svg>
<div class="a t" style="top:1141.83px;font-size:25px;font-weight:400;color:#222;letter-spacing:0.05px;left:2399px;-webkit-text-stroke:0.6px #222;">Stroke</div>
<div class="a" style="left:2686px;top:1132px;width:80px;height:44px;background:#00c80a;border-radius:22px;"></div>
<div class="a" style="left:2724px;top:1134px;width:40px;height:40px;border-radius:50%;background:#fff;box-shadow:0 1px 2px rgba(0,0,0,0.15);"></div>
<div class="a" style="left:2742px;top:1148px;width:2px;height:12px;background:#999;"></div>
<div class="a" style="left:2746.5px;top:1148px;width:2px;height:12px;background:#999;"></div>
<div class="a" style="left:2784.5px;top:1132.5px;width:63px;height:43px;border:1.5px solid #dcdcdc;border-radius:3px;box-sizing:border-box;background:#fff;"></div>
<svg class="a" style="left:2822px;top:1150px;" width="20" height="20" viewBox="0 0 20 20"><circle cx="10" cy="10" r="9.6" fill="#aaaaaa"/><path d="M5.8 7.3 H14.2 L10 13.5 Z" fill="#fff"/></svg>
<div class="a" style="left:2339px;top:1496px;width:538px;height:96px;background:#fafbfd;border-top:1.5px solid #e3e3e3;box-sizing:border-box;"></div>
<div class="a t" style="top:1508.81px;font-size:20.3px;font-weight:400;color:#777;letter-spacing:0.7px;left:2380.5px;">Column</div>
<div class="a t" style="top:1508.81px;font-size:20.3px;font-weight:400;color:#777;letter-spacing:-0.4px;left:2630px;">Row</div>
<div class="a" style="left:2609px;top:1504px;width:1.5px;height:71px;background:#e0e0e0;"></div>
<div class="a" style="left:2485px;top:1548px;width:1.5px;height:26px;background:#e0e0e0;"></div>
<div class="a" style="left:2735px;top:1548px;width:1.5px;height:26px;background:#e0e0e0;"></div>
<svg class="a" style="left:2410.5px;top:1548px;" width="23" height="29" viewBox="0 0 23 29"><path d="M1 5 H8 M4.5 1.5 V8.5" stroke="#333" stroke-width="1.6"/><rect x="1" y="12.3" width="7" height="14.5" fill="none" stroke="#15799a" stroke-width="1.8"/><path d="M1 19.5 H8" stroke="#15799a" stroke-width="1.8"/><rect x="14" y="3.5" width="7" height="13.5" fill="none" stroke="#333" stroke-width="1.8"/><path d="M14 10.3 H21" stroke="#333" stroke-width="1.8"/></svg>
<svg class="a" style="left:2534.5px;top:1548px;" width="23" height="29" viewBox="0 0 23 29"><path d="M14 5 H21 M17.5 1.5 V8.5" stroke="#333" stroke-width="1.6"/><rect x="14" y="12.3" width="7" height="14.5" fill="none" stroke="#15799a" stroke-width="1.8"/><path d="M14 19.5 H21" stroke="#15799a" stroke-width="1.8"/><rect x="1" y="3.5" width="7" height="13.5" fill="none" stroke="#333" stroke-width="1.8"/><path d="M1 10.3 H8" stroke="#333" stroke-width="1.8"/></svg>
<svg class="a" style="left:2657.5px;top:1551px;" width="30" height="23" viewBox="0 0 30 23"><rect x="1" y="1" width="15" height="7" fill="none" stroke="#15799a" stroke-width="1.8"/><path d="M8.5 1 V8" stroke="#15799a" stroke-width="1.8"/><path d="M20 4.5 H28 M24 0.5 V8.5" stroke="#333" stroke-width="1.6"/><rect x="9.5" y="14" width="15" height="7" fill="none" stroke="#333" stroke-width="1.8"/><path d="M17 14 V21" stroke="#333" stroke-width="1.8"/></svg>
<svg class="a" style="left:2781.5px;top:1551px;" width="30" height="23" viewBox="0 0 30 23"><rect x="9.5" y="1" width="15" height="7" fill="none" stroke="#333" stroke-width="1.8"/><path d="M17 1 V8" stroke="#333" stroke-width="1.8"/><rect x="1" y="14" width="15" height="7" fill="none" stroke="#15799a" stroke-width="1.8"/><path d="M8.5 14 V21" stroke="#15799a" stroke-width="1.8"/><path d="M20 17.5 H28 M24 13.5 V21.5" stroke="#333" stroke-width="1.6"/></svg>
<div class="a" style="left:2px;top:1593px;width:2876px;height:57px;background:#fff;"></div>
<div class="a" style="left:2px;top:1592px;width:2876px;height:1px;background:#e3e3e3;"></div>
<div class="a" style="left:77px;top:1593px;width:1px;height:57px;background:#ececec;"></div>
<div class="a" style="left:320.5px;top:1593px;width:1px;height:57px;background:#ececec;"></div>
<div class="a" style="left:562px;top:1593px;width:1px;height:57px;background:#ececec;"></div>
<div class="a" style="left:2205px;top:1593px;width:1px;height:57px;background:#ececec;"></div>
<div class="a" style="left:2340.5px;top:1593px;width:1px;height:57px;background:#ececec;"></div>
<div class="a" style="left:2407.5px;top:1593px;width:1px;height:57px;background:#ececec;"></div>
<svg class="a" style="left:21px;top:1605px;" width="36" height="33" viewBox="0 0 36 33">
<path d="M15 2 C7.5 2 2 6.8 2 12.8 C2 16.5 4 19.7 7.2 21.6 L5.8 27.5 L12.5 23.3 C13.3 23.4 14.1 23.5 15 23.5 C22.5 23.5 28 18.7 28 12.8 C28 6.8 22.5 2 15 2 Z" fill="#fff" stroke="#333" stroke-width="1.8" stroke-linejoin="round"/>
<path d="M26.5 19 C30.5 20 33 22.3 33 25 C33 26.6 32.3 28 31 29 L31.8 31.8 L28.3 30.3 C27.5 30.5 26.8 30.5 26 30.5" fill="none" stroke="#333" stroke-width="1.8" stroke-linejoin="round"/>
<circle cx="9.5" cy="12.8" r="1.8" fill="#1a6f96"/><circle cx="15" cy="12.8" r="1.8" fill="#1a6f96"/><circle cx="20.5" cy="12.8" r="1.8" fill="#1a6f96"/>
</svg>
<div class="a" style="left:116px;top:1604px;width:52px;height:36px;background:#f5f5f5;border:1px solid #dcdcdc;box-sizing:border-box;"></div>
<div class="a t" style="top:1612.60px;font-size:23.5px;font-weight:400;color:#e8523f;left:-857.50px;width:2000px;text-align:center;">6</div>
<div class="a t" style="top:1612.86px;font-size:23.2px;font-weight:400;color:#222;letter-spacing:-0.15px;left:179px;">/ 12 Slides</div>
<svg class="a" style="left:337px;top:1609px;" width="32" height="25" viewBox="0 0 32 25"><rect x="1.2" y="1.2" width="29" height="22" fill="none" stroke="#555" stroke-width="1.8"/><rect x="5.5" y="5.5" width="5" height="5" fill="none" stroke="#555" stroke-width="1.5"/><rect x="5.5" y="13.5" width="5" height="5" fill="none" stroke="#555" stroke-width="1.5"/><rect x="13.5" y="5.5" width="13" height="13" fill="none" stroke="#555" stroke-width="1.5"/></svg>
<div class="a t" style="top:1612.86px;font-size:23.2px;font-weight:400;color:#222;letter-spacing:-0.25px;left:383px;">Normal View</div>
<svg class="a" style="left:522px;top:1622px;" width="16" height="10" viewBox="0 0 16 10"><path d="M1.5 1.5 L8 8 L14.5 1.5" fill="none" stroke="#444" stroke-width="1.8"/></svg>
<svg class="a" style="left:2223px;top:1608px;" width="26" height="29" viewBox="0 0 26 29"><path d="M1 1 H17 L24 8 V27 H1 Z" fill="#fff" stroke="#444" stroke-width="1.8" stroke-linejoin="round"/><path d="M17 1 V8 H24" fill="none" stroke="#444" stroke-width="1.2"/></svg>
<div class="a t" style="top:1610.86px;font-size:23.2px;font-weight:400;color:#222;letter-spacing:-0.2px;left:2266px;">Notes</div>
<svg class="a" style="left:2357px;top:1605px;" width="34" height="33" viewBox="0 0 34 33"><path d="M6 1 V27" stroke="#1a6f96" stroke-width="1.8" stroke-dasharray="3 2.5"/><path d="M1 6 H28" stroke="#1a6f96" stroke-width="1.8" stroke-dasharray="3 2.5"/><rect x="12.5" y="13" width="17.5" height="17.5" fill="none" stroke="#333" stroke-width="2"/></svg>
<div class="a t" style="top:1610.86px;font-size:23.2px;font-weight:400;color:#222;letter-spacing:-1.6px;left:2427px;">100%</div>
<div class="a" style="left:2494px;top:1619.5px;width:134px;height:4.5px;background:#e8523f;border-radius:2px;"></div>
<div class="a" style="left:2650px;top:1619.5px;width:154px;height:4.5px;background:#d9d9dc;border-radius:2px;"></div>
<div class="a" style="left:2628px;top:1610.5px;width:23px;height:23px;border-radius:50%;background:#fff;border:2.5px solid #bdbdbd;box-sizing:border-box;"></div>
<svg class="a" style="left:2821px;top:1607px;" width="30" height="30" viewBox="0 0 30 30"><rect x="1.2" y="1.2" width="27" height="27" fill="none" stroke="#555" stroke-width="1.6" stroke-dasharray="3 2"/><path d="M7 7 L15.5 15.5" stroke="#1a6f96" stroke-width="2.2"/><path d="M7 14.5 V7 H14.5" fill="none" stroke="#1a6f96" stroke-width="2.2"/><rect x="15.5" y="15.5" width="7.5" height="7.5" fill="none" stroke="#1a6f96" stroke-width="2.2"/></svg>
<div class="a" style="left:0px;top:0px;width:2880px;height:2px;background:#dcdcdc;"></div>
<div class="a" style="left:0px;top:1650px;width:2880px;height:2px;background:#dcdcdc;"></div>
<div class="a" style="left:0px;top:0px;width:2px;height:1652px;background:#dcdcdc;"></div>
<div class="a" style="left:2878px;top:0px;width:2px;height:1652px;background:#dcdcdc;"></div>
</body></html>
